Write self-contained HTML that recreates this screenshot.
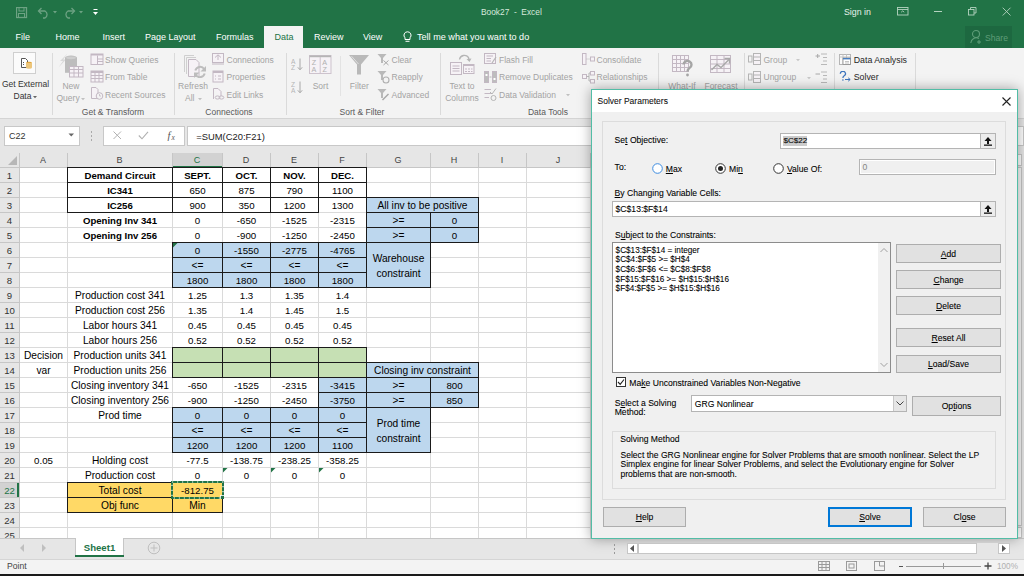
<!DOCTYPE html>
<html><head><meta charset="utf-8"><style>
html,body{margin:0;padding:0;}
body{width:1024px;height:576px;overflow:hidden;position:relative;background:#fff;font-family:"Liberation Sans", sans-serif;}
u{text-decoration:underline;text-underline-offset:1px;}
.dk{-webkit-text-stroke:0.08px currentColor;}
</style></head><body>
<div style="position:absolute;left:0px;top:0px;width:1024px;height:48px;background:#217346"></div>
<svg style="position:absolute;left:16px;top:7px;" width="12" height="12" viewBox="0 0 12 12"><rect x="0.5" y="0.5" width="10" height="10" fill="none" stroke="#6da283" stroke-width="1.3"/><rect x="3" y="0.5" width="5" height="3.5" fill="none" stroke="#6da283" stroke-width="1"/><rect x="2.5" y="6.5" width="6" height="4" fill="none" stroke="#6da283" stroke-width="1"/></svg>
<svg style="position:absolute;left:37px;top:7px;" width="13" height="12" viewBox="0 0 13 12"><path d="M2 4 H8 A4 4 0 0 1 8 11 H6" fill="none" stroke="#6da283" stroke-width="1.3"/><path d="M4.5 1 L1.5 4 L4.5 7" fill="none" stroke="#6da283" stroke-width="1.3"/></svg>
<svg style="position:absolute;left:53px;top:11px;" width="5" height="3" viewBox="0 0 5 3"><path d="M0 0 H4 L2 2.5Z" fill="#6da283"/></svg>
<svg style="position:absolute;left:63px;top:7px;" width="13" height="12" viewBox="0 0 13 12"><path d="M11 4 H5 A4 4 0 0 0 5 11 H7" fill="none" stroke="#6da283" stroke-width="1.3"/><path d="M8.5 1 L11.5 4 L8.5 7" fill="none" stroke="#6da283" stroke-width="1.3"/></svg>
<svg style="position:absolute;left:79px;top:11px;" width="5" height="3" viewBox="0 0 5 3"><path d="M0 0 H4 L2 2.5Z" fill="#6da283"/></svg>
<svg style="position:absolute;left:93px;top:9px;" width="6" height="7" viewBox="0 0 6 7"><rect x="0.5" y="0" width="4" height="1" fill="#fff"/><path d="M0 3 H5 L2.5 6Z" fill="#fff"/></svg>
<div class="" style="position:absolute;left:481px;top:8.23px;font-size:8.35px;line-height:8.35px;color:#d6e8dc;font-weight:normal;white-space:pre;">Book27  -  Excel</div>
<div class="" style="position:absolute;left:844px;top:7.85px;font-size:8.8px;line-height:8.8px;color:#e8f1eb;font-weight:normal;white-space:pre;">Sign in</div>
<svg style="position:absolute;left:897px;top:7px;" width="12" height="9" viewBox="0 0 12 9"><rect x="0.5" y="0.5" width="10.5" height="7.5" fill="none" stroke="#b4d3c0" stroke-width="0.9"/><line x1="0.5" y1="2.5" x2="11" y2="2.5" stroke="#b4d3c0" stroke-width="0.9"/><path d="M4.2 5.2 L5.7 3.9 L7.2 5.2" fill="none" stroke="#b4d3c0" stroke-width="0.9"/></svg>
<div style="position:absolute;left:934px;top:11px;width:8px;height:1px;background:#b4d3c0"></div>
<svg style="position:absolute;left:968px;top:7px;" width="9" height="9" viewBox="0 0 9 9"><rect x="0.5" y="2.5" width="5.5" height="5.5" fill="none" stroke="#b4d3c0" stroke-width="0.9"/><path d="M2.5 2.5 V0.5 H8 V6 H6" fill="none" stroke="#b4d3c0" stroke-width="0.9"/></svg>
<svg style="position:absolute;left:1002px;top:7px;" width="10" height="10" viewBox="0 0 10 10"><path d="M0.7 0.7 L8.5 8.5 M8.5 0.7 L0.7 8.5" stroke="#b4d3c0" stroke-width="0.9"/></svg>
<div style="position:absolute;left:264px;top:26px;width:39px;height:22px;background:#f3f3f3"></div>
<div class="" style="position:absolute;left:15.5px;top:33.38px;font-size:9px;line-height:9px;color:#ffffff;font-weight:normal;white-space:pre;">File</div>
<div class="" style="position:absolute;left:55.5px;top:33.38px;font-size:9px;line-height:9px;color:#ffffff;font-weight:normal;white-space:pre;">Home</div>
<div class="" style="position:absolute;left:102.5px;top:33.38px;font-size:9px;line-height:9px;color:#ffffff;font-weight:normal;white-space:pre;">Insert</div>
<div class="" style="position:absolute;left:145px;top:33.38px;font-size:9px;line-height:9px;color:#ffffff;font-weight:normal;white-space:pre;">Page Layout</div>
<div class="" style="position:absolute;left:216px;top:33.38px;font-size:9px;line-height:9px;color:#ffffff;font-weight:normal;white-space:pre;">Formulas</div>
<div class="" style="position:absolute;left:274.5px;top:33.38px;font-size:9px;line-height:9px;color:#217346;font-weight:normal;white-space:pre;">Data</div>
<div class="" style="position:absolute;left:314px;top:33.38px;font-size:9px;line-height:9px;color:#ffffff;font-weight:normal;white-space:pre;">Review</div>
<div class="" style="position:absolute;left:363px;top:33.38px;font-size:9px;line-height:9px;color:#ffffff;font-weight:normal;white-space:pre;">View</div>
<svg style="position:absolute;left:403px;top:31px;" width="9" height="12" viewBox="0 0 9 12"><path d="M4.5 0.8 A3.5 3.5 0 0 1 7 6.8 V8.5 H2 V6.8 A3.5 3.5 0 0 1 4.5 0.8Z" fill="none" stroke="#fff" stroke-width="1"/><line x1="2.5" y1="10.3" x2="6.5" y2="10.3" stroke="#fff"/></svg>
<div class="" style="position:absolute;left:417px;top:33.30px;font-size:9.1px;line-height:9.1px;color:#ffffff;font-weight:normal;white-space:pre;">Tell me what you want to do</div>
<div style="position:absolute;left:965px;top:26px;width:47px;height:22px;background:#1d6840"></div>
<svg style="position:absolute;left:970px;top:29px;" width="12" height="16" viewBox="0 0 12 16"><circle cx="6" cy="5" r="3.5" fill="none" stroke="#5f9d78" stroke-width="1.1"/><path d="M0.8 14 A5.5 5.5 0 0 1 9 9.5" fill="none" stroke="#5f9d78" stroke-width="1.1"/><path d="M9 11 V15 M7 13 H11" stroke="#5f9d78"/></svg>
<div class="" style="position:absolute;left:985px;top:33.72px;font-size:8.6px;line-height:8.6px;color:#5f9d78;font-weight:normal;white-space:pre;">Share</div>
<div style="position:absolute;left:0px;top:48px;width:1024px;height:70px;background:#f3f3f3"></div>
<div style="position:absolute;left:52px;top:53px;width:1px;height:62px;background:#dadada"></div>
<div style="position:absolute;left:174px;top:53px;width:1px;height:62px;background:#dadada"></div>
<div style="position:absolute;left:286px;top:53px;width:1px;height:62px;background:#dadada"></div>
<div style="position:absolute;left:440px;top:53px;width:1px;height:62px;background:#dadada"></div>
<div style="position:absolute;left:658px;top:53px;width:1px;height:62px;background:#dadada"></div>
<div style="position:absolute;left:744px;top:53px;width:1px;height:62px;background:#dadada"></div>
<div style="position:absolute;left:834px;top:53px;width:1px;height:62px;background:#dadada"></div>
<div style="position:absolute;left:915px;top:53px;width:1px;height:62px;background:#dadada"></div>
<div style="position:absolute;left:340px;top:56px;width:1px;height:40px;background:#e3e3e3"></div>
<div style="position:absolute;left:13px;top:52px;width:23px;height:22px;background:#fbfbfb;border:1px solid #cfcfcf;box-sizing:border-box"></div>
<svg style="position:absolute;left:21px;top:58px;" width="12" height="11" viewBox="0 0 12 11"><path d="M0.5 0.5 H4.5 L6.5 2.5 V9.5 H0.5Z" fill="#fff" stroke="#555"/><path d="M2 4.5 H3 M2 6.5 H3" stroke="#555"/><ellipse cx="8" cy="5" rx="3" ry="1.3" fill="#e2a63c"/><rect x="5" y="5" width="6" height="4.5" fill="#ecc57a"/><ellipse cx="8" cy="9.5" rx="3" ry="1.3" fill="#ecc57a"/></svg>
<div style="position:absolute;left:-174.5px;width:400px;text-align:center;top:80.10px;font-size:8.5px;line-height:8.5px;color:#333;font-weight:normal;white-space:pre;">Get External</div>
<div class="" style="position:absolute;left:13.5px;top:92.10px;font-size:8.5px;line-height:8.5px;color:#333;font-weight:normal;white-space:pre;">Data</div>
<svg style="position:absolute;left:32.5px;top:96px;" width="4" height="3" viewBox="0 0 4 3"><path d="M0 0 H4 L2 2.2Z" fill="#666"/></svg>
<svg style="position:absolute;left:58px;top:53px;" width="26" height="25" viewBox="0 0 26 25"><path d="M9.5 0.5 L2 8 L5 8 L0.5 14.5 L8 6.5 L5.2 6.5 L9.5 0.5Z" fill="#d9d9d9"/><ellipse cx="13" cy="4.8" rx="6" ry="2.3" fill="#bdbdbd"/><rect x="7" y="4.8" width="12" height="15" fill="#bdbdbd"/><ellipse cx="13" cy="4.8" rx="5" ry="1.4" fill="#cfcfcf"/><rect x="11.5" y="13.5" width="13.5" height="10.5" fill="#f6f2f6" stroke="#c3b8c3"/><path d="M11.5 16.5 H25 M11.5 20 H25 M16 13.5 V24 M20.5 13.5 V24" stroke="#c3b8c3"/></svg>
<div style="position:absolute;left:-129px;width:400px;text-align:center;top:81.60px;font-size:8.5px;line-height:8.5px;color:#a3a3a3;font-weight:normal;white-space:pre;">New</div>
<div class="" style="position:absolute;left:56.5px;top:94.10px;font-size:8.5px;line-height:8.5px;color:#a3a3a3;font-weight:normal;white-space:pre;">Query</div>
<svg style="position:absolute;left:80.5px;top:97.5px;" width="4" height="3" viewBox="0 0 4 3"><path d="M0 0 H4 L2 2.2Z" fill="#c0c0c0"/></svg>
<svg style="position:absolute;left:90px;top:53px;" width="14" height="13" viewBox="0 0 14 13"><rect x="1" y="1" width="12" height="10.5" fill="#f6f2f6" stroke="#c3b8c3"/><rect x="1" y="1" width="12" height="1.5" fill="#c3b8c3"/><path d="M7.5 2.5 V11.5 M7.5 6 H13 M7.5 8.5 H13" stroke="#c3b8c3"/></svg>
<svg style="position:absolute;left:90px;top:70px;" width="14" height="13" viewBox="0 0 14 13"><rect x="1" y="1" width="12" height="11" fill="#f6f2f6" stroke="#c3b8c3"/><rect x="1" y="1" width="12" height="2" fill="#c3b8c3"/><path d="M1 5.5 H13 M1 8.5 H13 M5 1 V12 M9 1 V12" stroke="#c3b8c3"/></svg>
<svg style="position:absolute;left:90px;top:87px;" width="14" height="13" viewBox="0 0 14 13"><path d="M1.5 0.5 H6 L8 2.5 V11.5 H1.5Z" fill="#f6f2f6" stroke="#c3b8c3"/><circle cx="9.5" cy="9" r="3.3" fill="#f3f3f3" stroke="#c3b8c3"/><path d="M9.5 7 V9 H11" fill="none" stroke="#c3b8c3" stroke-width="0.8"/></svg>
<div class="" style="position:absolute;left:105px;top:56.00px;font-size:8.5px;line-height:8.5px;color:#a3a3a3;font-weight:normal;white-space:pre;">Show Queries</div>
<div class="" style="position:absolute;left:105px;top:73.20px;font-size:8.5px;line-height:8.5px;color:#a3a3a3;font-weight:normal;white-space:pre;">From Table</div>
<div class="" style="position:absolute;left:105px;top:90.70px;font-size:8.5px;line-height:8.5px;color:#a3a3a3;font-weight:normal;white-space:pre;">Recent Sources</div>
<svg style="position:absolute;left:183px;top:55px;" width="24" height="23" viewBox="0 0 24 23"><path d="M1.5 17 V0.5 H11" fill="none" stroke="#cfcfcf"/><path d="M3.5 19 V2.5 H13" fill="none" stroke="#cfcfcf"/><path d="M5.5 4.5 H13 L16 7.5 V21.5 H5.5Z" fill="#f6f2f6" stroke="#c3b8c3"/><path d="M12.3 15.5 A5 5 0 0 1 21.2 14" fill="none" stroke="#bdbdbd" stroke-width="2"/><path d="M21.7 18.5 A5 5 0 0 1 12.8 20" fill="none" stroke="#bdbdbd" stroke-width="2"/><path d="M23 11 V16.5 H17.5Z" fill="#bdbdbd"/><path d="M11 23 V17.5 H16.5Z" fill="#bdbdbd"/></svg>
<div style="position:absolute;left:-7px;width:400px;text-align:center;top:81.60px;font-size:8.5px;line-height:8.5px;color:#a3a3a3;font-weight:normal;white-space:pre;">Refresh</div>
<div class="" style="position:absolute;left:185px;top:94.10px;font-size:8.5px;line-height:8.5px;color:#a3a3a3;font-weight:normal;white-space:pre;">All</div>
<svg style="position:absolute;left:197.5px;top:97.5px;" width="4" height="3" viewBox="0 0 4 3"><path d="M0 0 H4 L2 2.2Z" fill="#c0c0c0"/></svg>
<svg style="position:absolute;left:211px;top:53px;" width="14" height="12" viewBox="0 0 14 12"><rect x="1.5" y="0.5" width="11" height="9" fill="#f6f2f6" stroke="#c3b8c3"/><path d="M4 4.5 L7 1.8 L10 4.5 M7 2 V7" fill="none" stroke="#c3b8c3"/><path d="M1 11 H13" stroke="#c3b8c3"/></svg>
<svg style="position:absolute;left:212px;top:70px;" width="12" height="13" viewBox="0 0 12 13"><rect x="1" y="1" width="10" height="11" fill="#f6f2f6" stroke="#c3b8c3"/><rect x="1" y="1" width="10" height="2" fill="#c3b8c3"/><path d="M3 6 H4 M6 6 H9 M3 9 H4 M6 9 H9" stroke="#c3b8c3"/></svg>
<svg style="position:absolute;left:213px;top:88px;" width="12" height="12" viewBox="0 0 12 12"><path d="M0.5 0.5 H5 L8 3.5 V8 M0.5 0.5 V11" fill="#f6f2f6" stroke="#c3b8c3"/><ellipse cx="4.5" cy="9.5" rx="2.3" ry="1.6" fill="none" stroke="#c3b8c3"/><ellipse cx="8.5" cy="9.5" rx="2.3" ry="1.6" fill="none" stroke="#c3b8c3"/></svg>
<div class="" style="position:absolute;left:226.5px;top:56.00px;font-size:8.5px;line-height:8.5px;color:#a3a3a3;font-weight:normal;white-space:pre;">Connections</div>
<div class="" style="position:absolute;left:226.5px;top:73.20px;font-size:8.5px;line-height:8.5px;color:#a3a3a3;font-weight:normal;white-space:pre;">Properties</div>
<div class="" style="position:absolute;left:226.5px;top:90.70px;font-size:8.5px;line-height:8.5px;color:#a3a3a3;font-weight:normal;white-space:pre;">Edit Links</div>
<svg style="position:absolute;left:291px;top:58px;" width="12" height="13" viewBox="0 0 12 13"><text x="0" y="5.8" font-size="6.6" font-family="Liberation Sans" fill="#b5b5b5">A</text><text x="0" y="12" font-size="6.6" font-family="Liberation Sans" fill="#b5b5b5">Z</text><path d="M9 0.5 V11.5 M6.8 9.3 L9 11.8 L11.2 9.3" fill="none" stroke="#a8a8a8"/></svg>
<svg style="position:absolute;left:291px;top:81px;" width="12" height="13" viewBox="0 0 12 13"><text x="0" y="5.8" font-size="6.6" font-family="Liberation Sans" fill="#b5b5b5">Z</text><text x="0" y="12" font-size="6.6" font-family="Liberation Sans" fill="#b5b5b5">A</text><path d="M9 0.5 V11.5 M6.8 9.3 L9 11.8 L11.2 9.3" fill="none" stroke="#a8a8a8"/></svg>
<svg style="position:absolute;left:309px;top:55px;" width="23" height="19" viewBox="0 0 23 19"><rect x="0.5" y="0.5" width="21.5" height="18" fill="#f6f2f6" stroke="#cdc3cd"/><rect x="0.5" y="0.5" width="21.5" height="1.7" fill="#b5b5b5"/><line x1="11.2" y1="2" x2="11.2" y2="18.5" stroke="#cdc3cd"/><text x="2.8" y="9.5" font-size="7.2" font-family="Liberation Sans" fill="#b0b0b0">Z</text><text x="2.6" y="17" font-size="7.2" font-family="Liberation Sans" fill="#b0b0b0">A</text><text x="13.3" y="9.5" font-size="7.2" font-family="Liberation Sans" fill="#b0b0b0">A</text><text x="13.5" y="17" font-size="7.2" font-family="Liberation Sans" fill="#b0b0b0">Z</text></svg>
<div style="position:absolute;left:120.5px;width:400px;text-align:center;top:81.80px;font-size:8.5px;line-height:8.5px;color:#a3a3a3;font-weight:normal;white-space:pre;">Sort</div>
<svg style="position:absolute;left:348px;top:54px;" width="22" height="21" viewBox="0 0 22 21"><path d="M1 1 H21 L13 10.5 V20.5 H9 V10.5Z" fill="#b9b9b9"/><path d="M3.5 2.2 L10.5 10" stroke="#e8e8e8" stroke-width="0.8"/></svg>
<div style="position:absolute;left:159.3px;width:400px;text-align:center;top:81.80px;font-size:8.5px;line-height:8.5px;color:#a3a3a3;font-weight:normal;white-space:pre;">Filter</div>
<svg style="position:absolute;left:377px;top:53px;" width="13" height="13" viewBox="0 0 13 13"><path d="M0.5 1 H9.5 L6 5 V10 H4 V5Z" fill="#b9b9b9"/><path d="M6.5 7.5 L11.5 12 M11.5 7.5 L6.5 12" stroke="#a8a8a8"/></svg>
<svg style="position:absolute;left:377px;top:70px;" width="13" height="14" viewBox="0 0 13 14"><path d="M0.5 1 H9.5 L6 5 V10 H4 V5Z" fill="#b9b9b9"/><circle cx="9" cy="10" r="3" fill="none" stroke="#b0b0b0" stroke-width="1.1"/></svg>
<svg style="position:absolute;left:377px;top:88px;" width="13" height="13" viewBox="0 0 13 13"><path d="M0.5 1 H9.5 L6 5 V10 H4 V5Z" fill="#b9b9b9"/><path d="M5.5 12 L11.5 6" stroke="#a8a8a8" stroke-width="1.4"/></svg>
<div class="" style="position:absolute;left:391.5px;top:55.60px;font-size:8.5px;line-height:8.5px;color:#a3a3a3;font-weight:normal;white-space:pre;">Clear</div>
<div class="" style="position:absolute;left:391.5px;top:73.30px;font-size:8.5px;line-height:8.5px;color:#a3a3a3;font-weight:normal;white-space:pre;">Reapply</div>
<div class="" style="position:absolute;left:391.5px;top:90.50px;font-size:8.5px;line-height:8.5px;color:#a3a3a3;font-weight:normal;white-space:pre;">Advanced</div>
<div style="position:absolute;left:162px;width:400px;text-align:center;top:107.80px;font-size:8.5px;line-height:8.5px;color:#595959;font-weight:normal;white-space:pre;">Sort &amp; Filter</div>
<div style="position:absolute;left:-87px;width:400px;text-align:center;top:107.80px;font-size:8.5px;line-height:8.5px;color:#595959;font-weight:normal;white-space:pre;">Get &amp; Transform</div>
<div style="position:absolute;left:29px;width:400px;text-align:center;top:107.80px;font-size:8.5px;line-height:8.5px;color:#595959;font-weight:normal;white-space:pre;">Connections</div>
<svg style="position:absolute;left:450px;top:54px;" width="25" height="21" viewBox="0 0 25 21"><path d="M9.5 5.5 A5 5 0 0 1 18.5 3.5 L19 6" fill="none" stroke="#b5b5b5" stroke-width="1.3"/><path d="M16.5 5 L19.5 8 L21.5 4.5Z" fill="#b5b5b5"/><rect x="0.5" y="8.5" width="11" height="12" fill="#f6f2f6" stroke="#c3b8c3"/><path d="M2.5 12 H9.5 M2.5 14.5 H9.5 M2.5 17 H9.5" stroke="#c3b8c3"/><rect x="13.5" y="10.5" width="10.5" height="9" fill="#f6f2f6" stroke="#c3b8c3"/><rect x="13.5" y="10.5" width="10.5" height="1.5" fill="#c3b8c3"/><path d="M15 15 H22.5 M15 17.5 H22.5" stroke="#c3b8c3" stroke-dasharray="2 1"/></svg>
<div style="position:absolute;left:262px;width:400px;text-align:center;top:81.80px;font-size:8.5px;line-height:8.5px;color:#a3a3a3;font-weight:normal;white-space:pre;">Text to</div>
<div style="position:absolute;left:262px;width:400px;text-align:center;top:94.10px;font-size:8.5px;line-height:8.5px;color:#a3a3a3;font-weight:normal;white-space:pre;">Columns</div>
<svg style="position:absolute;left:484px;top:53px;" width="13" height="12" viewBox="0 0 13 12"><rect x="0.5" y="0.5" width="11" height="10" fill="#f6f2f6" stroke="#c3b8c3"/><path d="M2.5 3 H9 M2.5 5.5 H7 M2.5 8 H7" stroke="#c3b8c3"/><path d="M8 10 L12 4" stroke="#b5b5b5" stroke-width="1.2"/></svg>
<svg style="position:absolute;left:484px;top:71px;" width="13" height="12" viewBox="0 0 13 12"><rect x="0.5" y="0.5" width="4" height="11" fill="#bdbdbd" stroke="#c3b8c3"/><rect x="8.5" y="0.5" width="4" height="11" fill="#bdbdbd" stroke="#c3b8c3"/><path d="M5.5 6 H7.5" stroke="#b5b5b5"/><rect x="1.5" y="3" width="2" height="2" fill="#fff"/><rect x="9.5" y="7" width="2" height="2" fill="#fff"/></svg>
<svg style="position:absolute;left:484px;top:88px;" width="13" height="13" viewBox="0 0 13 13"><path d="M0.5 1.5 H7 M0.5 5.5 H7 M0.5 9.5 H5" stroke="#c3b8c3" stroke-width="1"/><path d="M6 4 L8 6 L12 0.5" fill="none" stroke="#b5b5b5"/><circle cx="9.5" cy="10" r="2.5" fill="none" stroke="#b5b5b5"/></svg>
<div class="" style="position:absolute;left:499px;top:55.60px;font-size:8.5px;line-height:8.5px;color:#a3a3a3;font-weight:normal;white-space:pre;">Flash Fill</div>
<div class="" style="position:absolute;left:499px;top:73.30px;font-size:8.5px;line-height:8.5px;color:#a3a3a3;font-weight:normal;white-space:pre;">Remove Duplicates</div>
<div class="" style="position:absolute;left:499px;top:90.50px;font-size:8.5px;line-height:8.5px;color:#a3a3a3;font-weight:normal;white-space:pre;">Data Validation</div>
<svg style="position:absolute;left:566px;top:94px;" width="4" height="3" viewBox="0 0 4 3"><path d="M0 0 H4 L2 2.2Z" fill="#c0c0c0"/></svg>
<svg style="position:absolute;left:582px;top:53px;" width="13" height="12" viewBox="0 0 13 12"><rect x="0.5" y="0.5" width="3.5" height="11" fill="#f6f2f6" stroke="#c3b8c3"/><path d="M4.5 6 H8" stroke="#b5b5b5" stroke-dasharray="1 1"/><rect x="8.5" y="4" width="4" height="4" fill="#f6f2f6" stroke="#c3b8c3"/></svg>
<svg style="position:absolute;left:582px;top:71px;" width="13" height="13" viewBox="0 0 13 13"><rect x="0.5" y="3.5" width="4" height="4" fill="#f6f2f6" stroke="#c3b8c3"/><path d="M4.5 5.5 H7 V2 H8 M7 5.5 V10 H8" fill="none" stroke="#b5b5b5"/><rect x="8.5" y="0.5" width="4" height="3.5" fill="#f6f2f6" stroke="#c3b8c3"/><rect x="8.5" y="8.5" width="4" height="3.5" fill="#f6f2f6" stroke="#c3b8c3"/></svg>
<div class="" style="position:absolute;left:596.5px;top:55.60px;font-size:8.5px;line-height:8.5px;color:#a3a3a3;font-weight:normal;white-space:pre;">Consolidate</div>
<div class="" style="position:absolute;left:596.5px;top:73.30px;font-size:8.5px;line-height:8.5px;color:#a3a3a3;font-weight:normal;white-space:pre;">Relationships</div>
<div style="position:absolute;left:348px;width:400px;text-align:center;top:107.80px;font-size:8.5px;line-height:8.5px;color:#595959;font-weight:normal;white-space:pre;">Data Tools</div>
<svg style="position:absolute;left:672px;top:55px;" width="24" height="23" viewBox="0 0 24 23"><rect x="0.5" y="0.5" width="16" height="16" fill="#f6f2f6" stroke="#c3b8c3"/><path d="M0.5 4.5 H16.5 M0.5 8.5 H16.5 M0.5 12.5 H16.5 M4.5 0.5 V16.5 M8.5 0.5 V16.5 M12.5 0.5 V16.5" stroke="#c3b8c3"/><path d="M11.5 9.5 A4 3.8 0 1 1 17.5 13 Q15.5 14.2 15.5 16.5" fill="none" stroke="#a5a5a5" stroke-width="2.4"/><circle cx="15.5" cy="20" r="1.4" fill="#a5a5a5"/></svg>
<svg style="position:absolute;left:710px;top:55px;" width="23" height="22" viewBox="0 0 23 22"><rect x="0.5" y="0.5" width="20" height="17" fill="#f6f2f6" stroke="#c3b8c3"/><path d="M0.5 4.5 H20.5 M0.5 9 H20.5 M0.5 13.5 H20.5 M7 0.5 V17.5 M14 0.5 V17.5" stroke="#c3b8c3"/><path d="M1.5 15 L7 9.5 L11 12.5 L19 4.5" fill="none" stroke="#a9a9a9" stroke-width="1.4"/><path d="M14.5 3.5 H19.5 V8.5" fill="none" stroke="#a9a9a9" stroke-width="1.4"/></svg>
<div style="position:absolute;left:482px;width:400px;text-align:center;top:81.80px;font-size:8.5px;line-height:8.5px;color:#a3a3a3;font-weight:normal;white-space:pre;">What-If</div>
<div style="position:absolute;left:521px;width:400px;text-align:center;top:81.80px;font-size:8.5px;line-height:8.5px;color:#a3a3a3;font-weight:normal;white-space:pre;">Forecast</div>
<svg style="position:absolute;left:748px;top:53px;" width="13" height="12" viewBox="0 0 13 12"><rect x="0.5" y="3" width="3.5" height="6" fill="none" stroke="#b5b5b5"/><rect x="5.5" y="0.5" width="7" height="11" fill="#f6f2f6" stroke="#b5b5b5"/><path d="M5.5 4 H12.5 M5.5 7.5 H12.5" stroke="#b5b5b5"/></svg>
<div class="" style="position:absolute;left:763.5px;top:55.50px;font-size:8.5px;line-height:8.5px;color:#a3a3a3;font-weight:normal;white-space:pre;">Group</div>
<svg style="position:absolute;left:796px;top:59px;" width="4" height="3" viewBox="0 0 4 3"><path d="M0 0 H4 L2 2.2Z" fill="#c8c8c8"/></svg>
<svg style="position:absolute;left:748px;top:71px;" width="13" height="12" viewBox="0 0 13 12"><rect x="0.5" y="3" width="3.5" height="6" fill="none" stroke="#b5b5b5"/><rect x="5.5" y="0.5" width="7" height="11" fill="#f6f2f6" stroke="#b5b5b5"/><path d="M5.5 4 H12.5 M5.5 7.5 H12.5" stroke="#b5b5b5"/></svg>
<div class="" style="position:absolute;left:763.5px;top:73.20px;font-size:8.5px;line-height:8.5px;color:#a3a3a3;font-weight:normal;white-space:pre;">Ungroup</div>
<svg style="position:absolute;left:806.5px;top:77px;" width="4" height="3" viewBox="0 0 4 3"><path d="M0 0 H4 L2 2.2Z" fill="#c8c8c8"/></svg>
<svg style="position:absolute;left:815px;top:53px;" width="13" height="12" viewBox="0 0 13 12"><path d="M0.5 3 H5 M2.7 1 V5" stroke="#a8a8a8"/><path d="M6 1 H12 M8 4.5 H12 M8 8 H12 M6 11.5 H12" stroke="#b8b8b8"/></svg>
<svg style="position:absolute;left:815px;top:71px;" width="13" height="12" viewBox="0 0 13 12"><path d="M0.5 3 H5" stroke="#a8a8a8"/><path d="M6 1 H12 M8 4.5 H12 M8 8 H12 M6 11.5 H12" stroke="#b8b8b8"/></svg>
<svg style="position:absolute;left:839px;top:54px;" width="12" height="11" viewBox="0 0 12 11"><rect x="0.5" y="0.5" width="11" height="10" fill="#fafafa" stroke="#b5b5b5"/><path d="M0.5 3 H11.5 M4 0.5 V10.5 M7.5 0.5 V4" stroke="#c5c5c5"/><rect x="4" y="4" width="7.5" height="6.5" fill="#fff" stroke="#8a8a8a" stroke-width="0.8"/><rect x="4" y="4" width="7.5" height="1.4" fill="#4a7fc1"/><path d="M6 7.5 H10 M6 9 H10" stroke="#aaa" stroke-width="0.7"/></svg>
<div class="" style="position:absolute;left:853.7px;top:55.75px;font-size:8.8px;line-height:8.8px;color:#262626;font-weight:normal;white-space:pre;">Data Analysis</div>
<svg style="position:absolute;left:839px;top:71px;" width="13" height="11" viewBox="0 0 13 11"><path d="M1.3 2.8 A2.6 2.4 0 1 1 5.2 4.8 Q3.9 5.6 3.9 7" fill="none" stroke="#3d74bd" stroke-width="1.3"/><circle cx="3.9" cy="9" r="0.8" fill="#3d74bd"/><path d="M6 8.5 H11 M9.2 6.8 L11.2 8.5 L9.2 10.2" fill="none" stroke="#3d74bd" stroke-width="1"/></svg>
<div class="" style="position:absolute;left:853.7px;top:72.85px;font-size:8.8px;line-height:8.8px;color:#262626;font-weight:normal;white-space:pre;">Solver</div>
<div style="position:absolute;left:0px;top:118px;width:1024px;height:1px;background:#d4d4d4"></div>
<div style="position:absolute;left:0px;top:119px;width:1024px;height:34px;background:#e6e6e6"></div>
<div style="position:absolute;left:4px;top:126px;width:76px;height:20px;background:#fff;border:1px solid #c8c8c8;box-sizing:border-box"></div>
<div class="" style="position:absolute;left:9px;top:131.88px;font-size:9px;line-height:9px;color:#333;font-weight:normal;white-space:pre;">C22</div>
<svg style="position:absolute;left:68px;top:133px;" width="7" height="5" viewBox="0 0 7 5"><path d="M0.5 0.5 H6 L3.25 3.5Z" fill="#666"/></svg>
<div style="position:absolute;left:91px;top:131px;width:1px;height:1.5px;background:#aaa"></div>
<div style="position:absolute;left:91px;top:135px;width:1px;height:1.5px;background:#aaa"></div>
<div style="position:absolute;left:91px;top:139px;width:1px;height:1.5px;background:#aaa"></div>
<div style="position:absolute;left:103px;top:126px;width:82px;height:20px;background:#fff;border:1px solid #c8c8c8;box-sizing:border-box"></div>
<svg style="position:absolute;left:113px;top:131px;" width="9" height="9" viewBox="0 0 9 9"><path d="M0.5 0.5 L8 8 M8 0.5 L0.5 8" stroke="#b0b0b0" stroke-width="1"/></svg>
<svg style="position:absolute;left:138px;top:131px;" width="11" height="9" viewBox="0 0 11 9"><path d="M0.8 4.5 L4 7.8 L10 0.8" fill="none" stroke="#b0b0b0" stroke-width="1.1"/></svg>
<div class="" style="position:absolute;left:167.5px;top:131.11px;font-size:10.5px;line-height:10.5px;color:#555;font-weight:normal;white-space:pre;font-family:'Liberation Serif',serif"><i>f</i></div>
<div class="" style="position:absolute;left:171.5px;top:133.65px;font-size:7.5px;line-height:7.5px;color:#555;font-weight:normal;white-space:pre;font-family:'Liberation Serif',serif;font-style:italic">x</div>
<div style="position:absolute;left:187px;top:126px;width:837px;height:20px;background:#fff;border:1px solid #c8c8c8;box-sizing:border-box"></div>
<div class="" style="position:absolute;left:196.3px;top:132.04px;font-size:9.4px;line-height:9.4px;color:#222;font-weight:normal;white-space:pre;">=SUM(C20:F21)</div>
<div style="position:absolute;left:0px;top:153px;width:1024px;height:14px;background:#e6e6e6"></div>
<div style="position:absolute;left:0px;top:167px;width:1024px;height:371px;background:#fff"></div>
<div style="position:absolute;left:0px;top:167px;width:19px;height:371px;background:#e6e6e6"></div>
<div style="position:absolute;left:173px;top:153px;width:49px;height:14px;background:#d2d2d2"></div>
<div style="position:absolute;left:172px;top:166px;width:50px;height:2px;background:#217346"></div>
<div style="position:absolute;left:0px;top:483px;width:19px;height:14px;background:#d2d2d2"></div>
<div style="position:absolute;left:17px;top:482px;width:2px;height:15px;background:#217346"></div>
<svg style="position:absolute;left:8px;top:156px;" width="9" height="9" viewBox="0 0 9 9"><path d="M9 0 V9 H0Z" fill="#b7b7b7"/></svg>
<div style="position:absolute;left:19px;top:153px;width:1px;height:14px;background:#c6c6c6"></div>
<div style="position:absolute;left:67px;top:153px;width:1px;height:14px;background:#c6c6c6"></div>
<div style="position:absolute;left:172px;top:153px;width:1px;height:14px;background:#c6c6c6"></div>
<div style="position:absolute;left:222px;top:153px;width:1px;height:14px;background:#c6c6c6"></div>
<div style="position:absolute;left:270px;top:153px;width:1px;height:14px;background:#c6c6c6"></div>
<div style="position:absolute;left:318px;top:153px;width:1px;height:14px;background:#c6c6c6"></div>
<div style="position:absolute;left:366px;top:153px;width:1px;height:14px;background:#c6c6c6"></div>
<div style="position:absolute;left:430px;top:153px;width:1px;height:14px;background:#c6c6c6"></div>
<div style="position:absolute;left:478px;top:153px;width:1px;height:14px;background:#c6c6c6"></div>
<div style="position:absolute;left:526px;top:153px;width:1px;height:14px;background:#c6c6c6"></div>
<div style="position:absolute;left:590px;top:153px;width:1px;height:14px;background:#c6c6c6"></div>
<div style="position:absolute;left:660px;top:153px;width:1px;height:14px;background:#c6c6c6"></div>
<div style="position:absolute;left:730px;top:153px;width:1px;height:14px;background:#c6c6c6"></div>
<div style="position:absolute;left:0px;top:167px;width:1024px;height:1px;background:#c6c6c6"></div>
<div style="position:absolute;left:19px;top:167px;width:1px;height:371px;background:#c6c6c6"></div>
<div style="position:absolute;left:-157.0px;width:400px;text-align:center;top:156.38px;font-size:9px;line-height:9px;color:#444;font-weight:normal;white-space:pre;">A</div>
<div style="position:absolute;left:-80.5px;width:400px;text-align:center;top:156.38px;font-size:9px;line-height:9px;color:#444;font-weight:normal;white-space:pre;">B</div>
<div style="position:absolute;left:-3.0px;width:400px;text-align:center;top:156.38px;font-size:9px;line-height:9px;color:#217346;font-weight:normal;white-space:pre;">C</div>
<div style="position:absolute;left:46.0px;width:400px;text-align:center;top:156.38px;font-size:9px;line-height:9px;color:#444;font-weight:normal;white-space:pre;">D</div>
<div style="position:absolute;left:94.0px;width:400px;text-align:center;top:156.38px;font-size:9px;line-height:9px;color:#444;font-weight:normal;white-space:pre;">E</div>
<div style="position:absolute;left:142.0px;width:400px;text-align:center;top:156.38px;font-size:9px;line-height:9px;color:#444;font-weight:normal;white-space:pre;">F</div>
<div style="position:absolute;left:198.0px;width:400px;text-align:center;top:156.38px;font-size:9px;line-height:9px;color:#444;font-weight:normal;white-space:pre;">G</div>
<div style="position:absolute;left:254.0px;width:400px;text-align:center;top:156.38px;font-size:9px;line-height:9px;color:#444;font-weight:normal;white-space:pre;">H</div>
<div style="position:absolute;left:302.0px;width:400px;text-align:center;top:156.38px;font-size:9px;line-height:9px;color:#444;font-weight:normal;white-space:pre;">I</div>
<div style="position:absolute;left:358.0px;width:400px;text-align:center;top:156.38px;font-size:9px;line-height:9px;color:#444;font-weight:normal;white-space:pre;">J</div>
<div style="position:absolute;left:20px;top:182px;width:1004px;height:1px;background:#dadada"></div>
<div style="position:absolute;left:0px;top:182px;width:19px;height:1px;background:#c6c6c6"></div>
<div style="position:absolute;left:20px;top:197px;width:1004px;height:1px;background:#dadada"></div>
<div style="position:absolute;left:0px;top:197px;width:19px;height:1px;background:#c6c6c6"></div>
<div style="position:absolute;left:20px;top:212px;width:1004px;height:1px;background:#dadada"></div>
<div style="position:absolute;left:0px;top:212px;width:19px;height:1px;background:#c6c6c6"></div>
<div style="position:absolute;left:20px;top:227px;width:1004px;height:1px;background:#dadada"></div>
<div style="position:absolute;left:0px;top:227px;width:19px;height:1px;background:#c6c6c6"></div>
<div style="position:absolute;left:20px;top:242px;width:1004px;height:1px;background:#dadada"></div>
<div style="position:absolute;left:0px;top:242px;width:19px;height:1px;background:#c6c6c6"></div>
<div style="position:absolute;left:20px;top:257px;width:1004px;height:1px;background:#dadada"></div>
<div style="position:absolute;left:0px;top:257px;width:19px;height:1px;background:#c6c6c6"></div>
<div style="position:absolute;left:20px;top:272px;width:1004px;height:1px;background:#dadada"></div>
<div style="position:absolute;left:0px;top:272px;width:19px;height:1px;background:#c6c6c6"></div>
<div style="position:absolute;left:20px;top:287px;width:1004px;height:1px;background:#dadada"></div>
<div style="position:absolute;left:0px;top:287px;width:19px;height:1px;background:#c6c6c6"></div>
<div style="position:absolute;left:20px;top:302px;width:1004px;height:1px;background:#dadada"></div>
<div style="position:absolute;left:0px;top:302px;width:19px;height:1px;background:#c6c6c6"></div>
<div style="position:absolute;left:20px;top:317px;width:1004px;height:1px;background:#dadada"></div>
<div style="position:absolute;left:0px;top:317px;width:19px;height:1px;background:#c6c6c6"></div>
<div style="position:absolute;left:20px;top:332px;width:1004px;height:1px;background:#dadada"></div>
<div style="position:absolute;left:0px;top:332px;width:19px;height:1px;background:#c6c6c6"></div>
<div style="position:absolute;left:20px;top:347px;width:1004px;height:1px;background:#dadada"></div>
<div style="position:absolute;left:0px;top:347px;width:19px;height:1px;background:#c6c6c6"></div>
<div style="position:absolute;left:20px;top:362px;width:1004px;height:1px;background:#dadada"></div>
<div style="position:absolute;left:0px;top:362px;width:19px;height:1px;background:#c6c6c6"></div>
<div style="position:absolute;left:20px;top:377px;width:1004px;height:1px;background:#dadada"></div>
<div style="position:absolute;left:0px;top:377px;width:19px;height:1px;background:#c6c6c6"></div>
<div style="position:absolute;left:20px;top:392px;width:1004px;height:1px;background:#dadada"></div>
<div style="position:absolute;left:0px;top:392px;width:19px;height:1px;background:#c6c6c6"></div>
<div style="position:absolute;left:20px;top:407px;width:1004px;height:1px;background:#dadada"></div>
<div style="position:absolute;left:0px;top:407px;width:19px;height:1px;background:#c6c6c6"></div>
<div style="position:absolute;left:20px;top:422px;width:1004px;height:1px;background:#dadada"></div>
<div style="position:absolute;left:0px;top:422px;width:19px;height:1px;background:#c6c6c6"></div>
<div style="position:absolute;left:20px;top:437px;width:1004px;height:1px;background:#dadada"></div>
<div style="position:absolute;left:0px;top:437px;width:19px;height:1px;background:#c6c6c6"></div>
<div style="position:absolute;left:20px;top:452px;width:1004px;height:1px;background:#dadada"></div>
<div style="position:absolute;left:0px;top:452px;width:19px;height:1px;background:#c6c6c6"></div>
<div style="position:absolute;left:20px;top:467px;width:1004px;height:1px;background:#dadada"></div>
<div style="position:absolute;left:0px;top:467px;width:19px;height:1px;background:#c6c6c6"></div>
<div style="position:absolute;left:20px;top:482px;width:1004px;height:1px;background:#dadada"></div>
<div style="position:absolute;left:0px;top:482px;width:19px;height:1px;background:#c6c6c6"></div>
<div style="position:absolute;left:20px;top:497px;width:1004px;height:1px;background:#dadada"></div>
<div style="position:absolute;left:0px;top:497px;width:19px;height:1px;background:#c6c6c6"></div>
<div style="position:absolute;left:20px;top:512px;width:1004px;height:1px;background:#dadada"></div>
<div style="position:absolute;left:0px;top:512px;width:19px;height:1px;background:#c6c6c6"></div>
<div style="position:absolute;left:20px;top:527px;width:1004px;height:1px;background:#dadada"></div>
<div style="position:absolute;left:0px;top:527px;width:19px;height:1px;background:#c6c6c6"></div>
<div style="position:absolute;left:20px;top:542px;width:1004px;height:1px;background:#dadada"></div>
<div style="position:absolute;left:0px;top:542px;width:19px;height:1px;background:#c6c6c6"></div>
<div style="position:absolute;left:67px;top:168px;width:1px;height:370px;background:#dadada"></div>
<div style="position:absolute;left:172px;top:168px;width:1px;height:370px;background:#dadada"></div>
<div style="position:absolute;left:222px;top:168px;width:1px;height:370px;background:#dadada"></div>
<div style="position:absolute;left:270px;top:168px;width:1px;height:370px;background:#dadada"></div>
<div style="position:absolute;left:318px;top:168px;width:1px;height:370px;background:#dadada"></div>
<div style="position:absolute;left:366px;top:168px;width:1px;height:370px;background:#dadada"></div>
<div style="position:absolute;left:430px;top:168px;width:1px;height:370px;background:#dadada"></div>
<div style="position:absolute;left:478px;top:168px;width:1px;height:370px;background:#dadada"></div>
<div style="position:absolute;left:526px;top:168px;width:1px;height:370px;background:#dadada"></div>
<div style="position:absolute;left:590px;top:168px;width:1px;height:370px;background:#dadada"></div>
<div style="position:absolute;left:660px;top:168px;width:1px;height:370px;background:#dadada"></div>
<div style="position:absolute;left:730px;top:168px;width:1px;height:370px;background:#dadada"></div>
<div style="position:absolute;left:-190.5px;width:400px;text-align:center;top:171.07px;font-size:9.6px;line-height:9.6px;color:#333;font-weight:normal;white-space:pre;">1</div>
<div style="position:absolute;left:-190.5px;width:400px;text-align:center;top:186.07px;font-size:9.6px;line-height:9.6px;color:#333;font-weight:normal;white-space:pre;">2</div>
<div style="position:absolute;left:-190.5px;width:400px;text-align:center;top:201.07px;font-size:9.6px;line-height:9.6px;color:#333;font-weight:normal;white-space:pre;">3</div>
<div style="position:absolute;left:-190.5px;width:400px;text-align:center;top:216.07px;font-size:9.6px;line-height:9.6px;color:#333;font-weight:normal;white-space:pre;">4</div>
<div style="position:absolute;left:-190.5px;width:400px;text-align:center;top:231.07px;font-size:9.6px;line-height:9.6px;color:#333;font-weight:normal;white-space:pre;">5</div>
<div style="position:absolute;left:-190.5px;width:400px;text-align:center;top:246.07px;font-size:9.6px;line-height:9.6px;color:#333;font-weight:normal;white-space:pre;">6</div>
<div style="position:absolute;left:-190.5px;width:400px;text-align:center;top:261.07px;font-size:9.6px;line-height:9.6px;color:#333;font-weight:normal;white-space:pre;">7</div>
<div style="position:absolute;left:-190.5px;width:400px;text-align:center;top:276.07px;font-size:9.6px;line-height:9.6px;color:#333;font-weight:normal;white-space:pre;">8</div>
<div style="position:absolute;left:-190.5px;width:400px;text-align:center;top:291.07px;font-size:9.6px;line-height:9.6px;color:#333;font-weight:normal;white-space:pre;">9</div>
<div style="position:absolute;left:-190.5px;width:400px;text-align:center;top:306.07px;font-size:9.6px;line-height:9.6px;color:#333;font-weight:normal;white-space:pre;">10</div>
<div style="position:absolute;left:-190.5px;width:400px;text-align:center;top:321.07px;font-size:9.6px;line-height:9.6px;color:#333;font-weight:normal;white-space:pre;">11</div>
<div style="position:absolute;left:-190.5px;width:400px;text-align:center;top:336.07px;font-size:9.6px;line-height:9.6px;color:#333;font-weight:normal;white-space:pre;">12</div>
<div style="position:absolute;left:-190.5px;width:400px;text-align:center;top:351.07px;font-size:9.6px;line-height:9.6px;color:#333;font-weight:normal;white-space:pre;">13</div>
<div style="position:absolute;left:-190.5px;width:400px;text-align:center;top:366.07px;font-size:9.6px;line-height:9.6px;color:#333;font-weight:normal;white-space:pre;">14</div>
<div style="position:absolute;left:-190.5px;width:400px;text-align:center;top:381.07px;font-size:9.6px;line-height:9.6px;color:#333;font-weight:normal;white-space:pre;">15</div>
<div style="position:absolute;left:-190.5px;width:400px;text-align:center;top:396.07px;font-size:9.6px;line-height:9.6px;color:#333;font-weight:normal;white-space:pre;">16</div>
<div style="position:absolute;left:-190.5px;width:400px;text-align:center;top:411.07px;font-size:9.6px;line-height:9.6px;color:#333;font-weight:normal;white-space:pre;">17</div>
<div style="position:absolute;left:-190.5px;width:400px;text-align:center;top:426.07px;font-size:9.6px;line-height:9.6px;color:#333;font-weight:normal;white-space:pre;">18</div>
<div style="position:absolute;left:-190.5px;width:400px;text-align:center;top:441.07px;font-size:9.6px;line-height:9.6px;color:#333;font-weight:normal;white-space:pre;">19</div>
<div style="position:absolute;left:-190.5px;width:400px;text-align:center;top:456.07px;font-size:9.6px;line-height:9.6px;color:#333;font-weight:normal;white-space:pre;">20</div>
<div style="position:absolute;left:-190.5px;width:400px;text-align:center;top:471.07px;font-size:9.6px;line-height:9.6px;color:#333;font-weight:normal;white-space:pre;">21</div>
<div style="position:absolute;left:-190.5px;width:400px;text-align:center;top:486.07px;font-size:9.6px;line-height:9.6px;color:#217346;font-weight:normal;white-space:pre;">22</div>
<div style="position:absolute;left:-190.5px;width:400px;text-align:center;top:501.07px;font-size:9.6px;line-height:9.6px;color:#333;font-weight:normal;white-space:pre;">23</div>
<div style="position:absolute;left:-190.5px;width:400px;text-align:center;top:516.07px;font-size:9.6px;line-height:9.6px;color:#333;font-weight:normal;white-space:pre;">24</div>
<div style="position:absolute;left:-190.5px;width:400px;text-align:center;top:531.07px;font-size:9.6px;line-height:9.6px;color:#333;font-weight:normal;white-space:pre;">25</div>
<div style="position:absolute;left:172px;top:242px;width:194px;height:45px;background:#bdd7ee"></div>
<div style="position:absolute;left:366px;top:197px;width:112px;height:15px;background:#bdd7ee"></div>
<div style="position:absolute;left:366px;top:212px;width:112px;height:30px;background:#bdd7ee"></div>
<div style="position:absolute;left:366px;top:242px;width:64px;height:45px;background:#bdd7ee"></div>
<div style="position:absolute;left:172px;top:347px;width:194px;height:30px;background:#c6e0b4"></div>
<div style="position:absolute;left:366px;top:362px;width:112px;height:45px;background:#bdd7ee"></div>
<div style="position:absolute;left:318px;top:377px;width:48px;height:30px;background:#bdd7ee"></div>
<div style="position:absolute;left:172px;top:407px;width:194px;height:45px;background:#bdd7ee"></div>
<div style="position:absolute;left:366px;top:407px;width:64px;height:45px;background:#bdd7ee"></div>
<div style="position:absolute;left:67px;top:482px;width:155px;height:30px;background:#ffd966"></div>
<div style="position:absolute;left:67px;top:167px;width:106px;height:16px;border:1px solid #1a1a1a;box-sizing:border-box"></div>
<div style="position:absolute;left:67px;top:182px;width:106px;height:16px;border:1px solid #1a1a1a;box-sizing:border-box"></div>
<div style="position:absolute;left:172px;top:167px;width:51px;height:16px;border:1px solid #1a1a1a;box-sizing:border-box"></div>
<div style="position:absolute;left:172px;top:182px;width:51px;height:16px;border:1px solid #1a1a1a;box-sizing:border-box"></div>
<div style="position:absolute;left:222px;top:167px;width:49px;height:16px;border:1px solid #1a1a1a;box-sizing:border-box"></div>
<div style="position:absolute;left:222px;top:182px;width:49px;height:16px;border:1px solid #1a1a1a;box-sizing:border-box"></div>
<div style="position:absolute;left:270px;top:167px;width:49px;height:16px;border:1px solid #1a1a1a;box-sizing:border-box"></div>
<div style="position:absolute;left:270px;top:182px;width:49px;height:16px;border:1px solid #1a1a1a;box-sizing:border-box"></div>
<div style="position:absolute;left:318px;top:167px;width:49px;height:16px;border:1px solid #1a1a1a;box-sizing:border-box"></div>
<div style="position:absolute;left:318px;top:182px;width:49px;height:16px;border:1px solid #1a1a1a;box-sizing:border-box"></div>
<div style="position:absolute;left:67px;top:197px;width:106px;height:16px;border:1px solid #1a1a1a;box-sizing:border-box"></div>
<div style="position:absolute;left:172px;top:197px;width:51px;height:16px;border:1px solid #1a1a1a;box-sizing:border-box"></div>
<div style="position:absolute;left:222px;top:197px;width:49px;height:16px;border:1px solid #1a1a1a;box-sizing:border-box"></div>
<div style="position:absolute;left:270px;top:197px;width:49px;height:16px;border:1px solid #1a1a1a;box-sizing:border-box"></div>
<div style="position:absolute;left:366px;top:197px;width:1px;height:16px;background:#1a1a1a"></div>
<div style="position:absolute;left:172px;top:242px;width:51px;height:16px;border:1px solid #1a1a1a;box-sizing:border-box"></div>
<div style="position:absolute;left:172px;top:257px;width:51px;height:16px;border:1px solid #1a1a1a;box-sizing:border-box"></div>
<div style="position:absolute;left:172px;top:272px;width:51px;height:16px;border:1px solid #1a1a1a;box-sizing:border-box"></div>
<div style="position:absolute;left:222px;top:242px;width:49px;height:16px;border:1px solid #1a1a1a;box-sizing:border-box"></div>
<div style="position:absolute;left:222px;top:257px;width:49px;height:16px;border:1px solid #1a1a1a;box-sizing:border-box"></div>
<div style="position:absolute;left:222px;top:272px;width:49px;height:16px;border:1px solid #1a1a1a;box-sizing:border-box"></div>
<div style="position:absolute;left:270px;top:242px;width:49px;height:16px;border:1px solid #1a1a1a;box-sizing:border-box"></div>
<div style="position:absolute;left:270px;top:257px;width:49px;height:16px;border:1px solid #1a1a1a;box-sizing:border-box"></div>
<div style="position:absolute;left:270px;top:272px;width:49px;height:16px;border:1px solid #1a1a1a;box-sizing:border-box"></div>
<div style="position:absolute;left:318px;top:242px;width:49px;height:16px;border:1px solid #1a1a1a;box-sizing:border-box"></div>
<div style="position:absolute;left:318px;top:257px;width:49px;height:16px;border:1px solid #1a1a1a;box-sizing:border-box"></div>
<div style="position:absolute;left:318px;top:272px;width:49px;height:16px;border:1px solid #1a1a1a;box-sizing:border-box"></div>
<div style="position:absolute;left:366px;top:197px;width:113px;height:16px;border:1px solid #1a1a1a;box-sizing:border-box"></div>
<div style="position:absolute;left:366px;top:212px;width:65px;height:16px;border:1px solid #1a1a1a;box-sizing:border-box"></div>
<div style="position:absolute;left:366px;top:227px;width:65px;height:16px;border:1px solid #1a1a1a;box-sizing:border-box"></div>
<div style="position:absolute;left:430px;top:212px;width:49px;height:16px;border:1px solid #1a1a1a;box-sizing:border-box"></div>
<div style="position:absolute;left:430px;top:227px;width:49px;height:16px;border:1px solid #1a1a1a;box-sizing:border-box"></div>
<div style="position:absolute;left:366px;top:242px;width:65px;height:46px;border:1px solid #1a1a1a;box-sizing:border-box"></div>
<div style="position:absolute;left:172px;top:347px;width:51px;height:16px;border:1px solid #1a1a1a;box-sizing:border-box"></div>
<div style="position:absolute;left:172px;top:362px;width:51px;height:16px;border:1px solid #1a1a1a;box-sizing:border-box"></div>
<div style="position:absolute;left:222px;top:347px;width:49px;height:16px;border:1px solid #1a1a1a;box-sizing:border-box"></div>
<div style="position:absolute;left:222px;top:362px;width:49px;height:16px;border:1px solid #1a1a1a;box-sizing:border-box"></div>
<div style="position:absolute;left:270px;top:347px;width:49px;height:16px;border:1px solid #1a1a1a;box-sizing:border-box"></div>
<div style="position:absolute;left:270px;top:362px;width:49px;height:16px;border:1px solid #1a1a1a;box-sizing:border-box"></div>
<div style="position:absolute;left:318px;top:347px;width:49px;height:16px;border:1px solid #1a1a1a;box-sizing:border-box"></div>
<div style="position:absolute;left:318px;top:362px;width:49px;height:16px;border:1px solid #1a1a1a;box-sizing:border-box"></div>
<div style="position:absolute;left:366px;top:362px;width:113px;height:16px;border:1px solid #1a1a1a;box-sizing:border-box"></div>
<div style="position:absolute;left:318px;top:377px;width:49px;height:16px;border:1px solid #1a1a1a;box-sizing:border-box"></div>
<div style="position:absolute;left:318px;top:392px;width:49px;height:16px;border:1px solid #1a1a1a;box-sizing:border-box"></div>
<div style="position:absolute;left:366px;top:377px;width:65px;height:16px;border:1px solid #1a1a1a;box-sizing:border-box"></div>
<div style="position:absolute;left:366px;top:392px;width:65px;height:16px;border:1px solid #1a1a1a;box-sizing:border-box"></div>
<div style="position:absolute;left:430px;top:377px;width:49px;height:16px;border:1px solid #1a1a1a;box-sizing:border-box"></div>
<div style="position:absolute;left:430px;top:392px;width:49px;height:16px;border:1px solid #1a1a1a;box-sizing:border-box"></div>
<div style="position:absolute;left:172px;top:407px;width:51px;height:16px;border:1px solid #1a1a1a;box-sizing:border-box"></div>
<div style="position:absolute;left:172px;top:422px;width:51px;height:16px;border:1px solid #1a1a1a;box-sizing:border-box"></div>
<div style="position:absolute;left:172px;top:437px;width:51px;height:16px;border:1px solid #1a1a1a;box-sizing:border-box"></div>
<div style="position:absolute;left:222px;top:407px;width:49px;height:16px;border:1px solid #1a1a1a;box-sizing:border-box"></div>
<div style="position:absolute;left:222px;top:422px;width:49px;height:16px;border:1px solid #1a1a1a;box-sizing:border-box"></div>
<div style="position:absolute;left:222px;top:437px;width:49px;height:16px;border:1px solid #1a1a1a;box-sizing:border-box"></div>
<div style="position:absolute;left:270px;top:407px;width:49px;height:16px;border:1px solid #1a1a1a;box-sizing:border-box"></div>
<div style="position:absolute;left:270px;top:422px;width:49px;height:16px;border:1px solid #1a1a1a;box-sizing:border-box"></div>
<div style="position:absolute;left:270px;top:437px;width:49px;height:16px;border:1px solid #1a1a1a;box-sizing:border-box"></div>
<div style="position:absolute;left:318px;top:407px;width:49px;height:16px;border:1px solid #1a1a1a;box-sizing:border-box"></div>
<div style="position:absolute;left:318px;top:422px;width:49px;height:16px;border:1px solid #1a1a1a;box-sizing:border-box"></div>
<div style="position:absolute;left:318px;top:437px;width:49px;height:16px;border:1px solid #1a1a1a;box-sizing:border-box"></div>
<div style="position:absolute;left:366px;top:407px;width:65px;height:46px;border:1px solid #1a1a1a;box-sizing:border-box"></div>
<div style="position:absolute;left:67px;top:482px;width:106px;height:16px;border:1px solid #1a1a1a;box-sizing:border-box"></div>
<div style="position:absolute;left:67px;top:497px;width:106px;height:16px;border:1px solid #1a1a1a;box-sizing:border-box"></div>
<div style="position:absolute;left:172px;top:482px;width:51px;height:16px;border:1px solid #1a1a1a;box-sizing:border-box"></div>
<div style="position:absolute;left:172px;top:497px;width:51px;height:16px;border:1px solid #1a1a1a;box-sizing:border-box"></div>
<div style="position:absolute;left:-80.0px;width:400px;text-align:center;top:170.87px;font-size:9.6px;line-height:9.6px;color:#000;font-weight:bold;white-space:pre;">Demand Circuit</div>
<div style="position:absolute;left:-2.5px;width:400px;text-align:center;top:170.87px;font-size:9.6px;line-height:9.6px;color:#000;font-weight:bold;white-space:pre;">SEPT.</div>
<div style="position:absolute;left:46.5px;width:400px;text-align:center;top:170.87px;font-size:9.6px;line-height:9.6px;color:#000;font-weight:bold;white-space:pre;">OCT.</div>
<div style="position:absolute;left:94.5px;width:400px;text-align:center;top:170.87px;font-size:9.6px;line-height:9.6px;color:#000;font-weight:bold;white-space:pre;">NOV.</div>
<div style="position:absolute;left:142.5px;width:400px;text-align:center;top:170.87px;font-size:9.6px;line-height:9.6px;color:#000;font-weight:bold;white-space:pre;">DEC.</div>
<div style="position:absolute;left:-80.0px;width:400px;text-align:center;top:185.87px;font-size:9.6px;line-height:9.6px;color:#000;font-weight:bold;white-space:pre;">IC341</div>
<div style="position:absolute;left:-2.5px;width:400px;text-align:center;top:185.99px;font-size:9.7px;line-height:9.7px;color:#000;font-weight:normal;white-space:pre;">650</div>
<div style="position:absolute;left:46.5px;width:400px;text-align:center;top:185.99px;font-size:9.7px;line-height:9.7px;color:#000;font-weight:normal;white-space:pre;">875</div>
<div style="position:absolute;left:94.5px;width:400px;text-align:center;top:185.99px;font-size:9.7px;line-height:9.7px;color:#000;font-weight:normal;white-space:pre;">790</div>
<div style="position:absolute;left:142.5px;width:400px;text-align:center;top:185.99px;font-size:9.7px;line-height:9.7px;color:#000;font-weight:normal;white-space:pre;">1100</div>
<div style="position:absolute;left:-80.0px;width:400px;text-align:center;top:200.87px;font-size:9.6px;line-height:9.6px;color:#000;font-weight:bold;white-space:pre;">IC256</div>
<div style="position:absolute;left:-2.5px;width:400px;text-align:center;top:200.99px;font-size:9.7px;line-height:9.7px;color:#000;font-weight:normal;white-space:pre;">900</div>
<div style="position:absolute;left:46.5px;width:400px;text-align:center;top:200.99px;font-size:9.7px;line-height:9.7px;color:#000;font-weight:normal;white-space:pre;">350</div>
<div style="position:absolute;left:94.5px;width:400px;text-align:center;top:200.99px;font-size:9.7px;line-height:9.7px;color:#000;font-weight:normal;white-space:pre;">1200</div>
<div style="position:absolute;left:142.5px;width:400px;text-align:center;top:200.99px;font-size:9.7px;line-height:9.7px;color:#000;font-weight:normal;white-space:pre;">1300</div>
<div style="position:absolute;left:-80.0px;width:400px;text-align:center;top:215.87px;font-size:9.6px;line-height:9.6px;color:#000;font-weight:bold;white-space:pre;">Opening Inv 341</div>
<div style="position:absolute;left:-2.5px;width:400px;text-align:center;top:215.99px;font-size:9.7px;line-height:9.7px;color:#000;font-weight:normal;white-space:pre;">0</div>
<div style="position:absolute;left:46.5px;width:400px;text-align:center;top:215.99px;font-size:9.7px;line-height:9.7px;color:#000;font-weight:normal;white-space:pre;">-650</div>
<div style="position:absolute;left:94.5px;width:400px;text-align:center;top:215.99px;font-size:9.7px;line-height:9.7px;color:#000;font-weight:normal;white-space:pre;">-1525</div>
<div style="position:absolute;left:142.5px;width:400px;text-align:center;top:215.99px;font-size:9.7px;line-height:9.7px;color:#000;font-weight:normal;white-space:pre;">-2315</div>
<div style="position:absolute;left:198.5px;width:400px;text-align:center;top:215.97px;font-size:10.2px;line-height:10.2px;color:#000;font-weight:normal;white-space:pre;">&gt;=</div>
<div style="position:absolute;left:254.5px;width:400px;text-align:center;top:215.99px;font-size:9.7px;line-height:9.7px;color:#000;font-weight:normal;white-space:pre;">0</div>
<div style="position:absolute;left:-80.0px;width:400px;text-align:center;top:230.87px;font-size:9.6px;line-height:9.6px;color:#000;font-weight:bold;white-space:pre;">Opening Inv 256</div>
<div style="position:absolute;left:-2.5px;width:400px;text-align:center;top:230.99px;font-size:9.7px;line-height:9.7px;color:#000;font-weight:normal;white-space:pre;">0</div>
<div style="position:absolute;left:46.5px;width:400px;text-align:center;top:230.99px;font-size:9.7px;line-height:9.7px;color:#000;font-weight:normal;white-space:pre;">-900</div>
<div style="position:absolute;left:94.5px;width:400px;text-align:center;top:230.99px;font-size:9.7px;line-height:9.7px;color:#000;font-weight:normal;white-space:pre;">-1250</div>
<div style="position:absolute;left:142.5px;width:400px;text-align:center;top:230.99px;font-size:9.7px;line-height:9.7px;color:#000;font-weight:normal;white-space:pre;">-2450</div>
<div style="position:absolute;left:198.5px;width:400px;text-align:center;top:230.97px;font-size:10.2px;line-height:10.2px;color:#000;font-weight:normal;white-space:pre;">&gt;=</div>
<div style="position:absolute;left:254.5px;width:400px;text-align:center;top:230.99px;font-size:9.7px;line-height:9.7px;color:#000;font-weight:normal;white-space:pre;">0</div>
<div style="position:absolute;left:-2.5px;width:400px;text-align:center;top:245.99px;font-size:9.7px;line-height:9.7px;color:#000;font-weight:normal;white-space:pre;">0</div>
<div style="position:absolute;left:46.5px;width:400px;text-align:center;top:245.99px;font-size:9.7px;line-height:9.7px;color:#000;font-weight:normal;white-space:pre;">-1550</div>
<div style="position:absolute;left:94.5px;width:400px;text-align:center;top:245.99px;font-size:9.7px;line-height:9.7px;color:#000;font-weight:normal;white-space:pre;">-2775</div>
<div style="position:absolute;left:142.5px;width:400px;text-align:center;top:245.99px;font-size:9.7px;line-height:9.7px;color:#000;font-weight:normal;white-space:pre;">-4765</div>
<div style="position:absolute;left:-2.5px;width:400px;text-align:center;top:260.97px;font-size:10.2px;line-height:10.2px;color:#000;font-weight:normal;white-space:pre;">&lt;=</div>
<div style="position:absolute;left:46.5px;width:400px;text-align:center;top:260.97px;font-size:10.2px;line-height:10.2px;color:#000;font-weight:normal;white-space:pre;">&lt;=</div>
<div style="position:absolute;left:94.5px;width:400px;text-align:center;top:260.97px;font-size:10.2px;line-height:10.2px;color:#000;font-weight:normal;white-space:pre;">&lt;=</div>
<div style="position:absolute;left:142.5px;width:400px;text-align:center;top:260.97px;font-size:10.2px;line-height:10.2px;color:#000;font-weight:normal;white-space:pre;">&lt;=</div>
<div style="position:absolute;left:-2.5px;width:400px;text-align:center;top:275.99px;font-size:9.7px;line-height:9.7px;color:#000;font-weight:normal;white-space:pre;">1800</div>
<div style="position:absolute;left:46.5px;width:400px;text-align:center;top:275.99px;font-size:9.7px;line-height:9.7px;color:#000;font-weight:normal;white-space:pre;">1800</div>
<div style="position:absolute;left:94.5px;width:400px;text-align:center;top:275.99px;font-size:9.7px;line-height:9.7px;color:#000;font-weight:normal;white-space:pre;">1800</div>
<div style="position:absolute;left:142.5px;width:400px;text-align:center;top:275.99px;font-size:9.7px;line-height:9.7px;color:#000;font-weight:normal;white-space:pre;">1800</div>
<div style="position:absolute;left:-80.0px;width:400px;text-align:center;top:290.97px;font-size:10.2px;line-height:10.2px;color:#000;font-weight:normal;white-space:pre;">Production cost 341</div>
<div style="position:absolute;left:-2.5px;width:400px;text-align:center;top:290.99px;font-size:9.7px;line-height:9.7px;color:#000;font-weight:normal;white-space:pre;">1.25</div>
<div style="position:absolute;left:46.5px;width:400px;text-align:center;top:290.99px;font-size:9.7px;line-height:9.7px;color:#000;font-weight:normal;white-space:pre;">1.3</div>
<div style="position:absolute;left:94.5px;width:400px;text-align:center;top:290.99px;font-size:9.7px;line-height:9.7px;color:#000;font-weight:normal;white-space:pre;">1.35</div>
<div style="position:absolute;left:142.5px;width:400px;text-align:center;top:290.99px;font-size:9.7px;line-height:9.7px;color:#000;font-weight:normal;white-space:pre;">1.4</div>
<div style="position:absolute;left:-80.0px;width:400px;text-align:center;top:305.97px;font-size:10.2px;line-height:10.2px;color:#000;font-weight:normal;white-space:pre;">Production cost 256</div>
<div style="position:absolute;left:-2.5px;width:400px;text-align:center;top:305.99px;font-size:9.7px;line-height:9.7px;color:#000;font-weight:normal;white-space:pre;">1.35</div>
<div style="position:absolute;left:46.5px;width:400px;text-align:center;top:305.99px;font-size:9.7px;line-height:9.7px;color:#000;font-weight:normal;white-space:pre;">1.4</div>
<div style="position:absolute;left:94.5px;width:400px;text-align:center;top:305.99px;font-size:9.7px;line-height:9.7px;color:#000;font-weight:normal;white-space:pre;">1.45</div>
<div style="position:absolute;left:142.5px;width:400px;text-align:center;top:305.99px;font-size:9.7px;line-height:9.7px;color:#000;font-weight:normal;white-space:pre;">1.5</div>
<div style="position:absolute;left:-80.0px;width:400px;text-align:center;top:320.97px;font-size:10.2px;line-height:10.2px;color:#000;font-weight:normal;white-space:pre;">Labor hours 341</div>
<div style="position:absolute;left:-2.5px;width:400px;text-align:center;top:320.99px;font-size:9.7px;line-height:9.7px;color:#000;font-weight:normal;white-space:pre;">0.45</div>
<div style="position:absolute;left:46.5px;width:400px;text-align:center;top:320.99px;font-size:9.7px;line-height:9.7px;color:#000;font-weight:normal;white-space:pre;">0.45</div>
<div style="position:absolute;left:94.5px;width:400px;text-align:center;top:320.99px;font-size:9.7px;line-height:9.7px;color:#000;font-weight:normal;white-space:pre;">0.45</div>
<div style="position:absolute;left:142.5px;width:400px;text-align:center;top:320.99px;font-size:9.7px;line-height:9.7px;color:#000;font-weight:normal;white-space:pre;">0.45</div>
<div style="position:absolute;left:-80.0px;width:400px;text-align:center;top:335.97px;font-size:10.2px;line-height:10.2px;color:#000;font-weight:normal;white-space:pre;">Labor hours 256</div>
<div style="position:absolute;left:-2.5px;width:400px;text-align:center;top:335.99px;font-size:9.7px;line-height:9.7px;color:#000;font-weight:normal;white-space:pre;">0.52</div>
<div style="position:absolute;left:46.5px;width:400px;text-align:center;top:335.99px;font-size:9.7px;line-height:9.7px;color:#000;font-weight:normal;white-space:pre;">0.52</div>
<div style="position:absolute;left:94.5px;width:400px;text-align:center;top:335.99px;font-size:9.7px;line-height:9.7px;color:#000;font-weight:normal;white-space:pre;">0.52</div>
<div style="position:absolute;left:142.5px;width:400px;text-align:center;top:335.99px;font-size:9.7px;line-height:9.7px;color:#000;font-weight:normal;white-space:pre;">0.52</div>
<div style="position:absolute;left:-156.5px;width:400px;text-align:center;top:350.97px;font-size:10.2px;line-height:10.2px;color:#000;font-weight:normal;white-space:pre;">Decision</div>
<div style="position:absolute;left:-80.0px;width:400px;text-align:center;top:350.97px;font-size:10.2px;line-height:10.2px;color:#000;font-weight:normal;white-space:pre;">Production units 341</div>
<div style="position:absolute;left:-156.5px;width:400px;text-align:center;top:365.97px;font-size:10.2px;line-height:10.2px;color:#000;font-weight:normal;white-space:pre;">var</div>
<div style="position:absolute;left:-80.0px;width:400px;text-align:center;top:365.97px;font-size:10.2px;line-height:10.2px;color:#000;font-weight:normal;white-space:pre;">Production units 256</div>
<div style="position:absolute;left:-80.0px;width:400px;text-align:center;top:380.97px;font-size:10.2px;line-height:10.2px;color:#000;font-weight:normal;white-space:pre;">Closing inventory 341</div>
<div style="position:absolute;left:-2.5px;width:400px;text-align:center;top:380.99px;font-size:9.7px;line-height:9.7px;color:#000;font-weight:normal;white-space:pre;">-650</div>
<div style="position:absolute;left:46.5px;width:400px;text-align:center;top:380.99px;font-size:9.7px;line-height:9.7px;color:#000;font-weight:normal;white-space:pre;">-1525</div>
<div style="position:absolute;left:94.5px;width:400px;text-align:center;top:380.99px;font-size:9.7px;line-height:9.7px;color:#000;font-weight:normal;white-space:pre;">-2315</div>
<div style="position:absolute;left:142.5px;width:400px;text-align:center;top:380.99px;font-size:9.7px;line-height:9.7px;color:#000;font-weight:normal;white-space:pre;">-3415</div>
<div style="position:absolute;left:198.5px;width:400px;text-align:center;top:380.97px;font-size:10.2px;line-height:10.2px;color:#000;font-weight:normal;white-space:pre;">&gt;=</div>
<div style="position:absolute;left:254.5px;width:400px;text-align:center;top:380.99px;font-size:9.7px;line-height:9.7px;color:#000;font-weight:normal;white-space:pre;">800</div>
<div style="position:absolute;left:-80.0px;width:400px;text-align:center;top:395.97px;font-size:10.2px;line-height:10.2px;color:#000;font-weight:normal;white-space:pre;">Closing inventory 256</div>
<div style="position:absolute;left:-2.5px;width:400px;text-align:center;top:395.99px;font-size:9.7px;line-height:9.7px;color:#000;font-weight:normal;white-space:pre;">-900</div>
<div style="position:absolute;left:46.5px;width:400px;text-align:center;top:395.99px;font-size:9.7px;line-height:9.7px;color:#000;font-weight:normal;white-space:pre;">-1250</div>
<div style="position:absolute;left:94.5px;width:400px;text-align:center;top:395.99px;font-size:9.7px;line-height:9.7px;color:#000;font-weight:normal;white-space:pre;">-2450</div>
<div style="position:absolute;left:142.5px;width:400px;text-align:center;top:395.99px;font-size:9.7px;line-height:9.7px;color:#000;font-weight:normal;white-space:pre;">-3750</div>
<div style="position:absolute;left:198.5px;width:400px;text-align:center;top:395.97px;font-size:10.2px;line-height:10.2px;color:#000;font-weight:normal;white-space:pre;">&gt;=</div>
<div style="position:absolute;left:254.5px;width:400px;text-align:center;top:395.99px;font-size:9.7px;line-height:9.7px;color:#000;font-weight:normal;white-space:pre;">850</div>
<div style="position:absolute;left:-80.0px;width:400px;text-align:center;top:410.97px;font-size:10.2px;line-height:10.2px;color:#000;font-weight:normal;white-space:pre;">Prod time</div>
<div style="position:absolute;left:-2.5px;width:400px;text-align:center;top:410.99px;font-size:9.7px;line-height:9.7px;color:#000;font-weight:normal;white-space:pre;">0</div>
<div style="position:absolute;left:46.5px;width:400px;text-align:center;top:410.99px;font-size:9.7px;line-height:9.7px;color:#000;font-weight:normal;white-space:pre;">0</div>
<div style="position:absolute;left:94.5px;width:400px;text-align:center;top:410.99px;font-size:9.7px;line-height:9.7px;color:#000;font-weight:normal;white-space:pre;">0</div>
<div style="position:absolute;left:142.5px;width:400px;text-align:center;top:410.99px;font-size:9.7px;line-height:9.7px;color:#000;font-weight:normal;white-space:pre;">0</div>
<div style="position:absolute;left:-2.5px;width:400px;text-align:center;top:425.97px;font-size:10.2px;line-height:10.2px;color:#000;font-weight:normal;white-space:pre;">&lt;=</div>
<div style="position:absolute;left:46.5px;width:400px;text-align:center;top:425.97px;font-size:10.2px;line-height:10.2px;color:#000;font-weight:normal;white-space:pre;">&lt;=</div>
<div style="position:absolute;left:94.5px;width:400px;text-align:center;top:425.97px;font-size:10.2px;line-height:10.2px;color:#000;font-weight:normal;white-space:pre;">&lt;=</div>
<div style="position:absolute;left:142.5px;width:400px;text-align:center;top:425.97px;font-size:10.2px;line-height:10.2px;color:#000;font-weight:normal;white-space:pre;">&lt;=</div>
<div style="position:absolute;left:-2.5px;width:400px;text-align:center;top:440.99px;font-size:9.7px;line-height:9.7px;color:#000;font-weight:normal;white-space:pre;">1200</div>
<div style="position:absolute;left:46.5px;width:400px;text-align:center;top:440.99px;font-size:9.7px;line-height:9.7px;color:#000;font-weight:normal;white-space:pre;">1200</div>
<div style="position:absolute;left:94.5px;width:400px;text-align:center;top:440.99px;font-size:9.7px;line-height:9.7px;color:#000;font-weight:normal;white-space:pre;">1200</div>
<div style="position:absolute;left:142.5px;width:400px;text-align:center;top:440.99px;font-size:9.7px;line-height:9.7px;color:#000;font-weight:normal;white-space:pre;">1100</div>
<div style="position:absolute;left:-156.5px;width:400px;text-align:center;top:455.99px;font-size:9.7px;line-height:9.7px;color:#000;font-weight:normal;white-space:pre;">0.05</div>
<div style="position:absolute;left:-80.0px;width:400px;text-align:center;top:455.97px;font-size:10.2px;line-height:10.2px;color:#000;font-weight:normal;white-space:pre;">Holding cost</div>
<div style="position:absolute;left:-2.5px;width:400px;text-align:center;top:455.99px;font-size:9.7px;line-height:9.7px;color:#000;font-weight:normal;white-space:pre;">-77.5</div>
<div style="position:absolute;left:46.5px;width:400px;text-align:center;top:455.99px;font-size:9.7px;line-height:9.7px;color:#000;font-weight:normal;white-space:pre;">-138.75</div>
<div style="position:absolute;left:94.5px;width:400px;text-align:center;top:455.99px;font-size:9.7px;line-height:9.7px;color:#000;font-weight:normal;white-space:pre;">-238.25</div>
<div style="position:absolute;left:142.5px;width:400px;text-align:center;top:455.99px;font-size:9.7px;line-height:9.7px;color:#000;font-weight:normal;white-space:pre;">-358.25</div>
<div style="position:absolute;left:-80.0px;width:400px;text-align:center;top:470.97px;font-size:10.2px;line-height:10.2px;color:#000;font-weight:normal;white-space:pre;">Production cost</div>
<div style="position:absolute;left:-2.5px;width:400px;text-align:center;top:470.99px;font-size:9.7px;line-height:9.7px;color:#000;font-weight:normal;white-space:pre;">0</div>
<div style="position:absolute;left:46.5px;width:400px;text-align:center;top:470.99px;font-size:9.7px;line-height:9.7px;color:#000;font-weight:normal;white-space:pre;">0</div>
<div style="position:absolute;left:94.5px;width:400px;text-align:center;top:470.99px;font-size:9.7px;line-height:9.7px;color:#000;font-weight:normal;white-space:pre;">0</div>
<div style="position:absolute;left:142.5px;width:400px;text-align:center;top:470.99px;font-size:9.7px;line-height:9.7px;color:#000;font-weight:normal;white-space:pre;">0</div>
<div style="position:absolute;left:-80.0px;width:400px;text-align:center;top:485.97px;font-size:10.2px;line-height:10.2px;color:#000;font-weight:normal;white-space:pre;">Total cost</div>
<div style="position:absolute;left:-2.5px;width:400px;text-align:center;top:485.99px;font-size:9.7px;line-height:9.7px;color:#000;font-weight:normal;white-space:pre;">-812.75</div>
<div style="position:absolute;left:-80.0px;width:400px;text-align:center;top:500.97px;font-size:10.2px;line-height:10.2px;color:#000;font-weight:normal;white-space:pre;">Obj func</div>
<div style="position:absolute;left:-2.5px;width:400px;text-align:center;top:500.97px;font-size:10.2px;line-height:10.2px;color:#000;font-weight:normal;white-space:pre;">Min</div>
<div style="position:absolute;left:222.5px;width:400px;text-align:center;top:200.97px;font-size:10.2px;line-height:10.2px;color:#000;font-weight:normal;white-space:pre;">All inv to be positive</div>
<div style="position:absolute;left:222.5px;width:400px;text-align:center;top:365.97px;font-size:10.2px;line-height:10.2px;color:#000;font-weight:normal;white-space:pre;">Closing inv constraint</div>
<div style="position:absolute;left:198.5px;width:400px;text-align:center;top:254.37px;font-size:10.2px;line-height:10.2px;color:#000;font-weight:normal;white-space:pre;">Warehouse</div>
<div style="position:absolute;left:198.5px;width:400px;text-align:center;top:269.37px;font-size:10.2px;line-height:10.2px;color:#000;font-weight:normal;white-space:pre;">constraint</div>
<div style="position:absolute;left:198.5px;width:400px;text-align:center;top:419.37px;font-size:10.2px;line-height:10.2px;color:#000;font-weight:normal;white-space:pre;">Prod time</div>
<div style="position:absolute;left:198.5px;width:400px;text-align:center;top:434.37px;font-size:10.2px;line-height:10.2px;color:#000;font-weight:normal;white-space:pre;">constraint</div>
<svg style="position:absolute;left:173px;top:243px;" width="5" height="5" viewBox="0 0 5 5"><path d="M0 0 H4.5 L0 4.5Z" fill="#217346"/></svg>
<svg style="position:absolute;left:223px;top:468px;" width="5" height="5" viewBox="0 0 5 5"><path d="M0 0 H4.5 L0 4.5Z" fill="#217346"/></svg>
<svg style="position:absolute;left:271px;top:468px;" width="5" height="5" viewBox="0 0 5 5"><path d="M0 0 H4.5 L0 4.5Z" fill="#217346"/></svg>
<svg style="position:absolute;left:319px;top:468px;" width="5" height="5" viewBox="0 0 5 5"><path d="M0 0 H4.5 L0 4.5Z" fill="#217346"/></svg>
<svg style="position:absolute;left:171px;top:481px;" width="53" height="18" viewBox="0 0 53 18"><rect x="1" y="1" width="51" height="16" fill="none" stroke="#217346" stroke-width="2"/><rect x="1" y="1" width="51" height="16" fill="none" stroke="#fff" stroke-width="1.2" stroke-dasharray="1.2 3.8" opacity="0.95"/><rect x="49.5" y="14.5" width="4" height="4" fill="#217346" stroke="#fff" stroke-width="0.8"/></svg>
<div style="position:absolute;left:0px;top:538px;width:1024px;height:21px;background:#e6e6e6"></div>
<div style="position:absolute;left:1008px;top:153px;width:16px;height:385px;background:#e6e6e6"></div>
<div style="position:absolute;left:1009px;top:154px;width:13px;height:12px;background:#fff;border:1px solid #c6c6c6;box-sizing:border-box"></div>
<div style="position:absolute;left:1009px;top:167px;width:13px;height:359px;background:#f7f7f7;border:1px solid #c6c6c6;box-sizing:border-box"></div>
<div style="position:absolute;left:1009px;top:527px;width:13px;height:11px;background:#fff;border:1px solid #c6c6c6;box-sizing:border-box"></div>
<div style="position:absolute;left:0px;top:538px;width:1024px;height:1px;background:#c6c6c6"></div>
<svg style="position:absolute;left:20px;top:544px;" width="5" height="8" viewBox="0 0 5 8"><path d="M4 0 L0 4 L4 8Z" fill="#bfbfbf"/></svg>
<svg style="position:absolute;left:42px;top:544px;" width="5" height="8" viewBox="0 0 5 8"><path d="M0 0 L4 4 L0 8Z" fill="#bfbfbf"/></svg>
<div style="position:absolute;left:75px;top:538px;width:49px;height:19px;background:#fff;border-left:1px solid #c6c6c6;border-right:1px solid #c6c6c6;box-sizing:border-box"></div>
<div style="position:absolute;left:75px;top:555px;width:49px;height:2px;background:#217346"></div>
<div style="position:absolute;left:-100.5px;width:400px;text-align:center;top:543.37px;font-size:9.6px;line-height:9.6px;color:#217346;font-weight:bold;white-space:pre;">Sheet1</div>
<svg style="position:absolute;left:147px;top:541px;" width="14" height="14" viewBox="0 0 14 14"><circle cx="7" cy="7" r="5.8" fill="none" stroke="#bfbfbf"/><path d="M7 3.5 V10.5 M3.5 7 H10.5" stroke="#bfbfbf"/></svg>
<div style="position:absolute;left:0px;top:560px;width:1024px;height:14px;background:#f3f3f3"></div>
<div style="position:absolute;left:0px;top:559px;width:1024px;height:1px;background:#d5d5d5"></div>
<div class="" style="position:absolute;left:7px;top:562.22px;font-size:8.6px;line-height:8.6px;color:#444;font-weight:normal;white-space:pre;">Point</div>
<div style="position:absolute;left:0px;top:574px;width:1024px;height:2px;background:#1a1a1a"></div>
<div class="dk">
<div style="position:absolute;left:591px;top:89px;width:427px;height:450px;box-shadow:0 0 12px rgba(0,0,0,0.35)"></div>
<div style="position:absolute;left:591px;top:89px;width:427px;height:450px;background:#f0f0f0;border:1px solid #52bda6;box-sizing:border-box"></div>
<div style="position:absolute;left:592px;top:90px;width:425px;height:22px;background:#fff"></div>
<div class="" style="position:absolute;left:597.5px;top:97.30px;font-size:8.5px;line-height:8.5px;color:#111;font-weight:normal;white-space:pre;">Solver Parameters</div>
<svg style="position:absolute;left:1002px;top:97px;" width="9" height="9" viewBox="0 0 9 9"><path d="M0.5 0.5 L8.5 8.5 M8.5 0.5 L0.5 8.5" stroke="#222" stroke-width="1.1"/></svg>
<div style="position:absolute;left:602px;top:121px;width:404px;height:379px;border:1px solid #dcdcdc;box-sizing:border-box"></div>
<div class="" style="position:absolute;left:614.6px;top:136.12px;font-size:8.6px;line-height:8.6px;color:#000;font-weight:normal;white-space:pre;">Se<u>t</u> Objective:</div>
<div style="position:absolute;left:780px;top:133px;width:216px;height:16px;background:#fff;border:1px solid #b4b4b4;box-sizing:border-box"></div>
<div style="position:absolute;left:783px;top:136px;width:24px;height:10px;background:#cccccc"></div>
<div class="" style="position:absolute;left:783.5px;top:136.94px;font-size:8.1px;line-height:8.1px;color:#000;font-weight:normal;white-space:pre;">$C$22</div>
<div style="position:absolute;left:980px;top:133px;width:16px;height:16px;background:#ececec;border:1px solid #b4b4b4;box-sizing:border-box"></div>
<svg style="position:absolute;left:983px;top:136px;" width="10" height="10" viewBox="0 0 10 10"><path d="M5 1 L1.5 5 H4 V8 H6 V5 H8.5Z" fill="#111"/><rect x="1" y="8.5" width="8" height="1.3" fill="#111"/></svg>
<div class="" style="position:absolute;left:614.6px;top:162.52px;font-size:8.6px;line-height:8.6px;color:#000;font-weight:normal;white-space:pre;">To:</div>
<svg style="position:absolute;left:652px;top:163px;" width="12" height="12" viewBox="0 0 12 12"><circle cx="5.5" cy="5.5" r="4.8" fill="#fff" stroke="#3c8be0" stroke-width="1"/></svg>
<div class="" style="position:absolute;left:665.8px;top:164.72px;font-size:8.6px;line-height:8.6px;color:#000;font-weight:normal;white-space:pre;"><u>M</u>ax</div>
<svg style="position:absolute;left:715px;top:163px;" width="12" height="12" viewBox="0 0 12 12"><circle cx="5.5" cy="5.5" r="4.8" fill="#fff" stroke="#333" stroke-width="1"/><circle cx="5.5" cy="5.5" r="2.5" fill="#222"/></svg>
<div class="" style="position:absolute;left:729px;top:164.72px;font-size:8.6px;line-height:8.6px;color:#000;font-weight:normal;white-space:pre;">Mi<u>n</u></div>
<svg style="position:absolute;left:773px;top:163px;" width="12" height="12" viewBox="0 0 12 12"><circle cx="5.5" cy="5.5" r="4.8" fill="#fff" stroke="#333" stroke-width="1"/></svg>
<div class="" style="position:absolute;left:787px;top:164.72px;font-size:8.6px;line-height:8.6px;color:#000;font-weight:normal;white-space:pre;"><u>V</u>alue Of:</div>
<div style="position:absolute;left:859px;top:159px;width:137px;height:16px;background:#f0f0f0;border:1px solid #b4b4b4;box-sizing:border-box;outline:1px solid #fff;outline-offset:-2px"></div>
<div class="" style="position:absolute;left:862.5px;top:162.72px;font-size:8.6px;line-height:8.6px;color:#8a8a8a;font-weight:normal;white-space:pre;">0</div>
<div class="" style="position:absolute;left:614.6px;top:188.52px;font-size:8.6px;line-height:8.6px;color:#000;font-weight:normal;white-space:pre;"><u>B</u>y Changing Variable Cells:</div>
<div style="position:absolute;left:612px;top:201px;width:384px;height:16px;background:#fff;border:1px solid #b4b4b4;box-sizing:border-box"></div>
<div class="" style="position:absolute;left:615.6px;top:204.72px;font-size:8.6px;line-height:8.6px;color:#000;font-weight:normal;white-space:pre;">$C$13:$F$14</div>
<div style="position:absolute;left:980px;top:201px;width:16px;height:16px;background:#ececec;border:1px solid #b4b4b4;box-sizing:border-box"></div>
<svg style="position:absolute;left:983px;top:204px;" width="10" height="10" viewBox="0 0 10 10"><path d="M5 1 L1.5 5 H4 V8 H6 V5 H8.5Z" fill="#111"/><rect x="1" y="8.5" width="8" height="1.3" fill="#111"/></svg>
<div class="" style="position:absolute;left:615px;top:230.82px;font-size:8.6px;line-height:8.6px;color:#000;font-weight:normal;white-space:pre;">S<u>u</u>bject to the Constraints:</div>
<div style="position:absolute;left:612px;top:242px;width:279px;height:131px;background:#fff;border:1px solid #8c8c8c;box-sizing:border-box"></div>
<div style="position:absolute;left:878px;top:243px;width:12px;height:129px;background:#f0f0f0"></div>
<svg style="position:absolute;left:880px;top:247px;" width="8" height="6" viewBox="0 0 8 6"><path d="M0.5 5 L4 1.5 L7.5 5" fill="none" stroke="#a0a0a0"/></svg>
<svg style="position:absolute;left:880px;top:362px;" width="8" height="6" viewBox="0 0 8 6"><path d="M0.5 1 L4 4.5 L7.5 1" fill="none" stroke="#a0a0a0"/></svg>
<div class="" style="position:absolute;left:615.6px;top:246.56px;font-size:8.2px;line-height:8.2px;color:#000;font-weight:normal;white-space:pre;">$C$13:$F$14 = integer</div>
<div class="" style="position:absolute;left:615.6px;top:256.26px;font-size:8.2px;line-height:8.2px;color:#000;font-weight:normal;white-space:pre;">$C$4:$F$5 &gt;= $H$4</div>
<div class="" style="position:absolute;left:615.6px;top:265.96px;font-size:8.2px;line-height:8.2px;color:#000;font-weight:normal;white-space:pre;">$C$6:$F$6 &lt;= $C$8:$F$8</div>
<div class="" style="position:absolute;left:615.6px;top:275.66px;font-size:8.2px;line-height:8.2px;color:#000;font-weight:normal;white-space:pre;">$F$15:$F$16 &gt;= $H$15:$H$16</div>
<div class="" style="position:absolute;left:615.6px;top:285.36px;font-size:8.2px;line-height:8.2px;color:#000;font-weight:normal;white-space:pre;">$F$4:$F$5 &gt;= $H$15:$H$16</div>
<div style="position:absolute;left:896px;top:244px;width:105px;height:19px;background:#e1e1e1;border:1px solid #adadad;box-sizing:border-box"></div>
<div style="position:absolute;left:748.5px;width:400px;text-align:center;top:249.52px;font-size:8.6px;line-height:8.6px;color:#000;font-weight:normal;white-space:pre;"><u>A</u>dd</div>
<div style="position:absolute;left:896px;top:270px;width:105px;height:19px;background:#e1e1e1;border:1px solid #adadad;box-sizing:border-box"></div>
<div style="position:absolute;left:748.5px;width:400px;text-align:center;top:275.52px;font-size:8.6px;line-height:8.6px;color:#000;font-weight:normal;white-space:pre;"><u>C</u>hange</div>
<div style="position:absolute;left:896px;top:296px;width:105px;height:19px;background:#e1e1e1;border:1px solid #adadad;box-sizing:border-box"></div>
<div style="position:absolute;left:748.5px;width:400px;text-align:center;top:301.52px;font-size:8.6px;line-height:8.6px;color:#000;font-weight:normal;white-space:pre;"><u>D</u>elete</div>
<div style="position:absolute;left:896px;top:328px;width:105px;height:19px;background:#e1e1e1;border:1px solid #adadad;box-sizing:border-box"></div>
<div style="position:absolute;left:748.5px;width:400px;text-align:center;top:333.52px;font-size:8.6px;line-height:8.6px;color:#000;font-weight:normal;white-space:pre;"><u>R</u>eset All</div>
<div style="position:absolute;left:896px;top:355px;width:105px;height:18px;background:#e1e1e1;border:1px solid #adadad;box-sizing:border-box"></div>
<div style="position:absolute;left:748.5px;width:400px;text-align:center;top:360.02px;font-size:8.6px;line-height:8.6px;color:#000;font-weight:normal;white-space:pre;"><u>L</u>oad/Save</div>
<div style="position:absolute;left:616px;top:377px;width:10px;height:10px;background:#fff;border:1px solid #333;box-sizing:border-box"></div>
<svg style="position:absolute;left:617px;top:378px;" width="8" height="8" viewBox="0 0 8 8"><path d="M1 4 L3.2 6.3 L7 1.5" fill="none" stroke="#222" stroke-width="1.1"/></svg>
<div class="" style="position:absolute;left:629.3px;top:378.52px;font-size:8.6px;line-height:8.6px;color:#000;font-weight:normal;white-space:pre;">Ma<u>k</u>e Unconstrained Variables Non-Negative</div>
<div class="" style="position:absolute;left:614.7px;top:398.72px;font-size:8.6px;line-height:8.6px;color:#000;font-weight:normal;white-space:pre;">S<u>e</u>lect a Solving</div>
<div class="" style="position:absolute;left:614.7px;top:408.22px;font-size:8.6px;line-height:8.6px;color:#000;font-weight:normal;white-space:pre;">Method:</div>
<div style="position:absolute;left:691px;top:395px;width:216px;height:17px;background:#fff;border:1px solid #b4b4b4;box-sizing:border-box"></div>
<div style="position:absolute;left:893px;top:396px;width:13px;height:15px;background:#e6e6e6;border-left:1px solid #c8c8c8;box-sizing:border-box"></div>
<svg style="position:absolute;left:896px;top:401px;" width="8" height="5" viewBox="0 0 8 5"><path d="M0.5 0.5 L4 4 L7.5 0.5" fill="none" stroke="#444"/></svg>
<div class="" style="position:absolute;left:694.8px;top:399.72px;font-size:8.6px;line-height:8.6px;color:#000;font-weight:normal;white-space:pre;">GRG Nonlinear</div>
<div style="position:absolute;left:912px;top:396px;width:89px;height:20px;background:#e1e1e1;border:1px solid #adadad;box-sizing:border-box"></div>
<div style="position:absolute;left:756.5px;width:400px;text-align:center;top:402.02px;font-size:8.6px;line-height:8.6px;color:#000;font-weight:normal;white-space:pre;">Op<u>t</u>ions</div>
<div style="position:absolute;left:612px;top:431px;width:384px;height:58px;border:1px solid #dcdcdc;box-sizing:border-box"></div>
<div class="" style="position:absolute;left:620.3px;top:435.42px;font-size:8.6px;line-height:8.6px;color:#000;font-weight:normal;white-space:pre;">Solving Method</div>
<div class="" style="position:absolute;left:620.5px;top:450.76px;font-size:8.55px;line-height:8.55px;color:#000;font-weight:normal;white-space:pre;">Select the GRG Nonlinear engine for Solver Problems that are smooth nonlinear. Select the LP</div>
<div class="" style="position:absolute;left:620.5px;top:460.36px;font-size:8.55px;line-height:8.55px;color:#000;font-weight:normal;white-space:pre;">Simplex engine for linear Solver Problems, and select the Evolutionary engine for Solver</div>
<div class="" style="position:absolute;left:620.5px;top:469.96px;font-size:8.55px;line-height:8.55px;color:#000;font-weight:normal;white-space:pre;">problems that are non-smooth.</div>
<div style="position:absolute;left:603px;top:507px;width:83px;height:20px;background:#e1e1e1;border:1px solid #adadad;box-sizing:border-box"></div>
<div style="position:absolute;left:444.5px;width:400px;text-align:center;top:513.02px;font-size:8.6px;line-height:8.6px;color:#000;font-weight:normal;white-space:pre;"><u>H</u>elp</div>
<div style="position:absolute;left:828px;top:507px;width:84px;height:20px;background:#e1e1e1;border:1px solid #0078d7;box-sizing:border-box"></div>
<div style="position:absolute;left:670.0px;width:400px;text-align:center;top:513.02px;font-size:8.6px;line-height:8.6px;color:#000;font-weight:normal;white-space:pre;"><u>S</u>olve</div>
<div style="position:absolute;left:829px;top:508px;width:82px;height:18px;border:1px solid #0078d7;box-sizing:border-box"></div>
<div style="position:absolute;left:923px;top:507px;width:83px;height:20px;background:#e1e1e1;border:1px solid #adadad;box-sizing:border-box"></div>
<div style="position:absolute;left:764.5px;width:400px;text-align:center;top:513.02px;font-size:8.6px;line-height:8.6px;color:#000;font-weight:normal;white-space:pre;">Cl<u>o</u>se</div>
</div>
<div style="position:absolute;left:614px;top:544px;width:1px;height:1.5px;background:#999"></div>
<div style="position:absolute;left:614px;top:548px;width:1px;height:1.5px;background:#999"></div>
<div style="position:absolute;left:614px;top:552px;width:1px;height:1.5px;background:#999"></div>
<div style="position:absolute;left:627px;top:543px;width:383px;height:11px;background:#e6e6e6"></div>
<div style="position:absolute;left:627px;top:543px;width:11px;height:11px;background:#fff;border:1px solid #c6c6c6;box-sizing:border-box"></div>
<svg style="position:absolute;left:630px;top:545px;" width="5" height="7" viewBox="0 0 5 7"><path d="M4 0 L0 3.5 L4 7Z" fill="#555"/></svg>
<div style="position:absolute;left:638px;top:543px;width:339px;height:11px;background:#fff;border:1px solid #c6c6c6;box-sizing:border-box"></div>
<div style="position:absolute;left:998px;top:543px;width:12px;height:11px;background:#fff;border:1px solid #c6c6c6;box-sizing:border-box"></div>
<svg style="position:absolute;left:1002px;top:545px;" width="5" height="7" viewBox="0 0 5 7"><path d="M0 0 L4 3.5 L0 7Z" fill="#555"/></svg>
<svg style="position:absolute;left:818px;top:561px;" width="12" height="10" viewBox="0 0 12 10"><rect x="0.5" y="0.5" width="11" height="9" fill="none" stroke="#9a9a9a"/><path d="M0.5 3.5 H11.5 M0.5 6.5 H11.5 M4 0.5 V9.5 M8 0.5 V9.5" stroke="#9a9a9a"/></svg>
<svg style="position:absolute;left:846px;top:561px;" width="11" height="10" viewBox="0 0 11 10"><rect x="0.5" y="0.5" width="10" height="9" fill="none" stroke="#9a9a9a"/><rect x="3" y="3" width="5" height="4" fill="none" stroke="#9a9a9a"/></svg>
<svg style="position:absolute;left:874px;top:561px;" width="11" height="10" viewBox="0 0 11 10"><rect x="0.5" y="0.5" width="10" height="9" fill="none" stroke="#9a9a9a"/><path d="M5.5 0.5 V5 H10.5" fill="none" stroke="#9a9a9a"/></svg>
<div style="position:absolute;left:899px;top:566px;width:4px;height:1px;background:#555"></div>
<div style="position:absolute;left:906px;top:566px;width:75px;height:1px;background:#999"></div>
<div style="position:absolute;left:943px;top:563px;width:1px;height:6px;background:#999"></div>
<svg style="position:absolute;left:984px;top:562px;" width="8" height="8" viewBox="0 0 8 8"><path d="M4 0.5 V7.5 M0.5 4 H7.5" stroke="#444" stroke-width="1.3"/></svg>
<div class="" style="position:absolute;left:997px;top:563.06px;font-size:8.2px;line-height:8.2px;color:#b0b0b0;font-weight:normal;white-space:pre;">100%</div>
</body></html>
